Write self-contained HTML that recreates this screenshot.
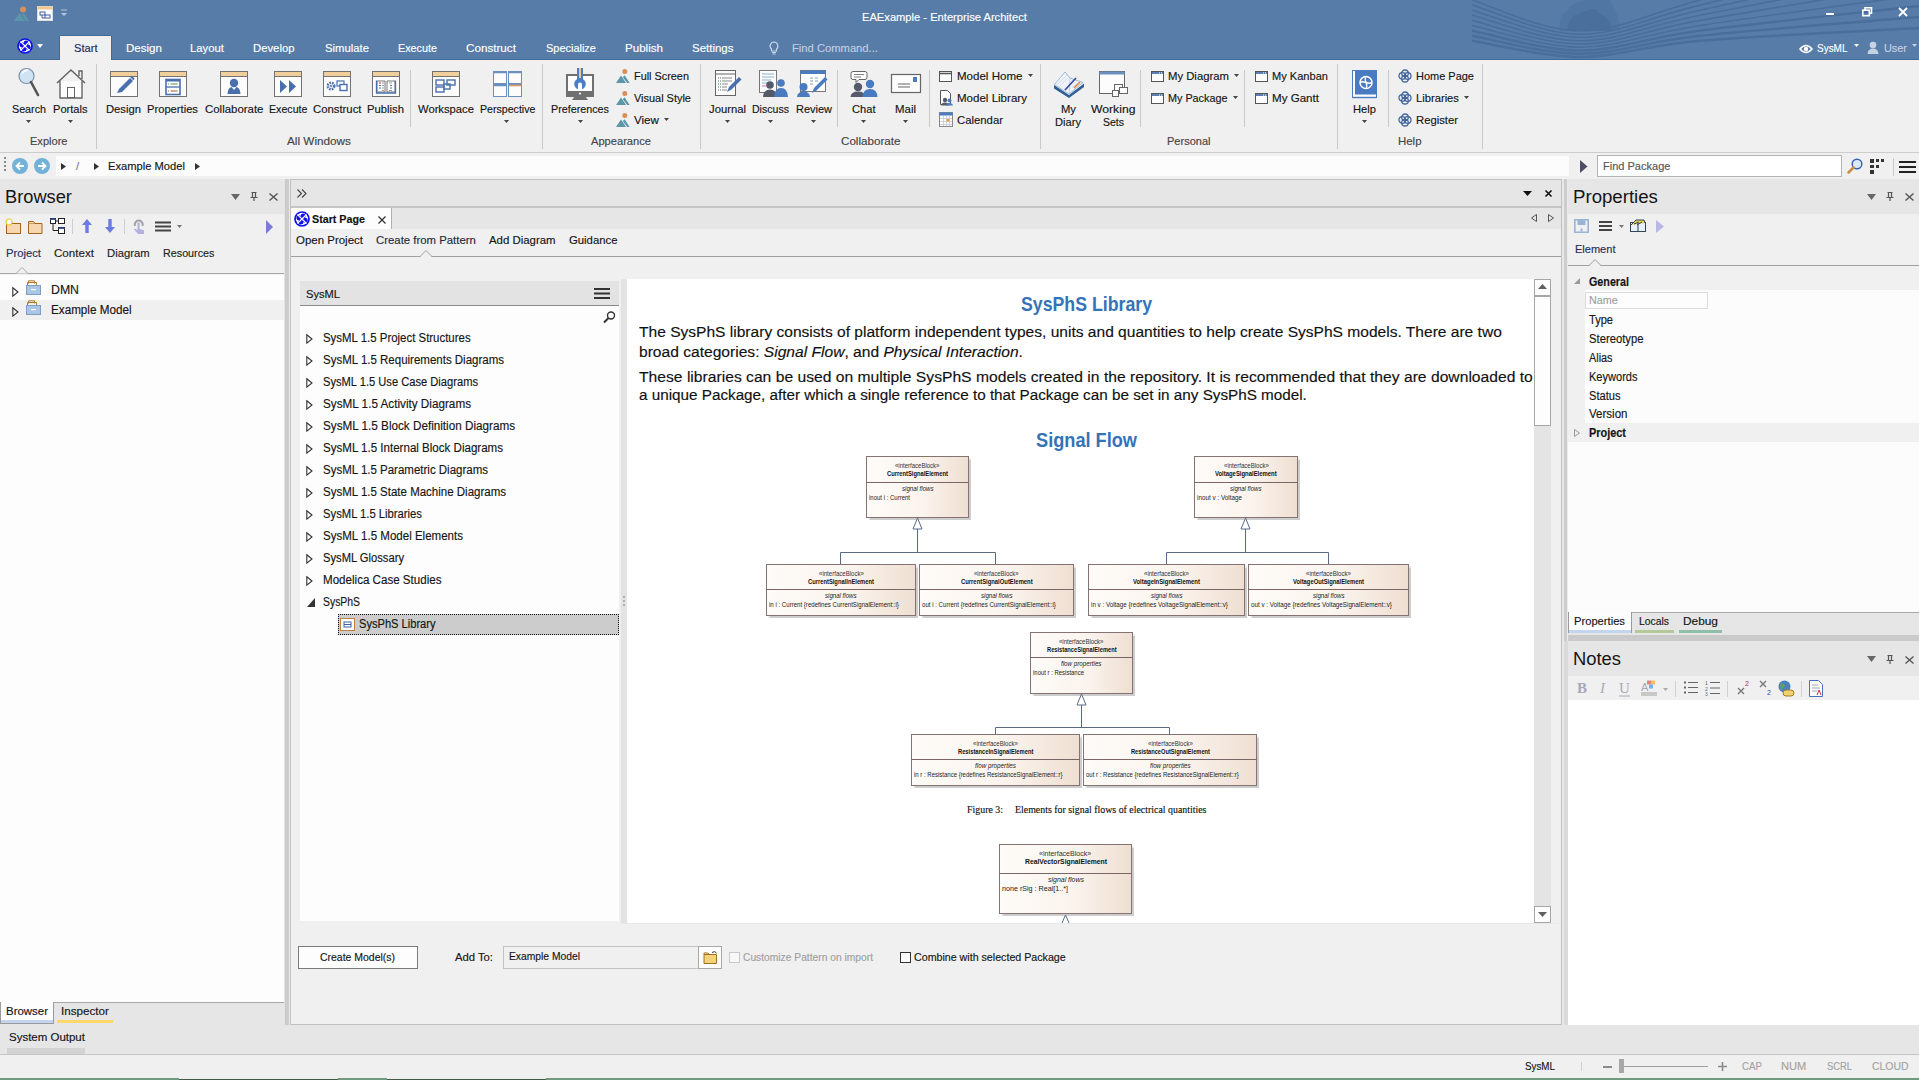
<!DOCTYPE html>
<html><head><meta charset="utf-8">
<style>
*{margin:0;padding:0;box-sizing:border-box}
html,body{width:1919px;height:1080px;overflow:hidden;background:#f0f0f0;font-family:"Liberation Sans",sans-serif;color:#151515}
.a{position:absolute}
.t{position:absolute;white-space:nowrap;-webkit-text-stroke:0.15px currentColor}
.n{-webkit-text-stroke:0}
svg{position:absolute;overflow:visible}
</style></head><body>

<div class="a" style="left:0px;top:0px;width:1919px;height:60px;background:#577ca8;"></div>
<svg style="left:0px;top:0px;overflow:hidden" width="1919" height="60" viewBox="0 0 1919 60"><g><path d="M1560 31 C1558 20, 1562 12, 1567 11 C1570 4, 1580 0, 1592 0 L1610 0 C1612 5, 1616 10, 1618 18 L1620 31 Z" fill="#5076a3"/><path d="M1568 31 C1566 20, 1575 14, 1583 12 C1590 8, 1602 12, 1610 22 L1612 31 Z" fill="#4b6f9c"/><circle cx="1593" cy="15" r="6" fill="#4b6f9c"/><path d="M1472 0.0 C1490.0 5.2 1542.0 31.0 1580 31.0 C1618.0 31.0 1643.5 15.2 1700 0.0 C1756.5 -15.2 1882.5 -50.0 1919 -60.0" stroke="#4a6e9b" stroke-width="1.6" fill="none"/><path d="M1472 5.1 C1490.0 10.0 1542.0 34.2 1580 34.2 C1618.0 34.2 1643.5 19.0 1700 5.1 C1756.5 -8.8 1882.5 -40.0 1919 -49.0" stroke="#4a6e9b" stroke-width="1.6" fill="none"/><path d="M1472 10.2 C1490.0 14.8 1542.0 37.5 1580 37.5 C1618.0 37.5 1643.5 22.8 1700 10.2 C1756.5 -2.4 1882.5 -30.0 1919 -38.0" stroke="#4a6e9b" stroke-width="1.6" fill="none"/><path d="M1472 15.3 C1490.0 19.5 1542.0 40.8 1580 40.8 C1618.0 40.8 1643.5 26.6 1700 15.3 C1756.5 4.0 1882.5 -19.9 1919 -27.0" stroke="#4a6e9b" stroke-width="1.6" fill="none"/><path d="M1472 20.4 C1490.0 24.3 1542.0 44.0 1580 44.0 C1618.0 44.0 1643.5 30.4 1700 20.4 C1756.5 10.4 1882.5 -9.9 1919 -16.0" stroke="#4a6e9b" stroke-width="1.6" fill="none"/><path d="M1472 25.5 C1490.0 29.1 1542.0 47.2 1580 47.2 C1618.0 47.2 1643.5 34.2 1700 25.5 C1756.5 16.8 1882.5 0.1 1919 -5.0" stroke="#4a6e9b" stroke-width="1.6" fill="none"/><path d="M1472 30.6 C1490.0 33.9 1542.0 50.5 1580 50.5 C1618.0 50.5 1643.5 38.0 1700 30.6 C1756.5 23.2 1882.5 10.1 1919 6.0" stroke="#4a6e9b" stroke-width="2.4" fill="none"/><path d="M1472 35.7 C1490.0 38.7 1542.0 53.8 1580 53.8 C1618.0 53.8 1643.5 41.8 1700 35.7 C1756.5 29.6 1882.5 20.1 1919 17.0" stroke="#4a6e9b" stroke-width="2.4" fill="none"/><path d="M1472 40.8 C1490.0 43.5 1542.0 57.0 1580 57.0 C1618.0 57.0 1643.5 45.6 1700 40.8 C1756.5 36.0 1882.5 30.1 1919 28.0" stroke="#4a6e9b" stroke-width="2.4" fill="none"/></g></svg>
<div class="t" style="left:862px;top:10px;font-size:11.2px;line-height:14px;color:#ffffff;transform:scaleX(0.9965);transform-origin:0 0;">EAExample - Enterprise Architect</div>
<svg style="left:13px;top:6px;" width="16" height="16" viewBox="0 0 16 16"><circle cx="10" cy="3.5" r="3" fill="#d8905a"/><path d="M1 15 L6.5 7 L12 15Z" fill="#5b96a9"/><path d="M9 9 L11 7 L16 15 L13 15Z" fill="#5b96a9"/></svg>
<svg style="left:37px;top:6px;" width="16" height="15" viewBox="0 0 16 15"><rect x="0.5" y="0.5" width="15" height="14" fill="#fff" stroke="#ddd"/><rect x="0.5" y="0.5" width="15" height="3" fill="#f0c890"/><rect x="3" y="6" width="5" height="3" fill="none" stroke="#3a5d9c"/><rect x="8" y="9" width="5" height="3" fill="none" stroke="#3a5d9c"/><path d="M5 9v3h3" stroke="#3a5d9c" fill="none"/></svg>
<svg style="left:61px;top:10px;" width="7" height="8" viewBox="0 0 7 8"><path d="M0 0h6" stroke="#b8c8dc"/><path d="M0 3h6l-3 3z" fill="#b8c8dc"/></svg>
<svg style="left:1826px;top:12px;" width="10" height="4" viewBox="0 0 10 4"><rect x="0" y="1" width="8" height="2" fill="#fff"/></svg>
<svg style="left:1862px;top:7px;" width="11" height="10" viewBox="0 0 11 10"><rect x="0.8" y="3.2" width="6.5" height="5.5" fill="none" stroke="#fff" stroke-width="1.6"/><path d="M3 3V0.8h6.5v5.5H7.5" fill="none" stroke="#fff" stroke-width="1.6"/></svg>
<svg style="left:1898px;top:7px;" width="10" height="10" viewBox="0 0 10 10"><path d="M1 1L9 9M9 1L1 9" stroke="#fff" stroke-width="1.8"/></svg>
<svg style="left:17px;top:38px;" width="16" height="16" viewBox="0 0 16 16"><g transform="scale(1.0)"><circle cx="8" cy="8" r="7" fill="#fff" stroke="#1010e8" stroke-width="1.7"/><circle cx="11.10" cy="9.13" r="2.5" fill="#1010e8"/><circle cx="6.87" cy="11.10" r="2.5" fill="#1010e8"/><circle cx="4.90" cy="6.87" r="2.5" fill="#1010e8"/><circle cx="9.13" cy="4.90" r="2.5" fill="#1010e8"/><path d="M3.5 3.5L12.5 12.5M12.5 3.5L3.5 12.5" stroke="#fff" stroke-width="1.1"/></g></svg>
<svg style="left:37px;top:44px;" width="6" height="4" viewBox="0 0 6 4"><path d="M0 0h6l-3 4z" fill="#fff"/></svg>
<div class="a" style="left:0px;top:59px;width:1919px;height:1px;background:#3f6998;"></div>
<div class="a" style="left:59px;top:36px;width:1px;height:24px;background:#3f6998;"></div>
<div class="a" style="left:111px;top:36px;width:1px;height:24px;background:#3f6998;"></div>
<div class="a" style="left:60px;top:35px;width:51px;height:1px;background:#3f6998;"></div>
<div class="a" style="left:60px;top:36px;width:51px;height:25px;background:#f0f0f0;border:1px solid #f6efe6;border-bottom:none"></div>
<div class="t" style="left:74px;top:41px;font-size:11.2px;line-height:14px;color:#1b2a5a;transform:scaleX(0.9935);transform-origin:0 0;">Start</div>
<div class="t" style="left:126px;top:41px;font-size:11.2px;line-height:14px;color:#fff;transform:scaleX(1.0326);transform-origin:0 0;">Design</div>
<div class="t" style="left:190px;top:41px;font-size:11.2px;line-height:14px;color:#fff;transform:scaleX(1.0111);transform-origin:0 0;">Layout</div>
<div class="t" style="left:253px;top:41px;font-size:11.2px;line-height:14px;color:#fff;transform:scaleX(1.0099);transform-origin:0 0;">Develop</div>
<div class="t" style="left:325px;top:41px;font-size:11.2px;line-height:14px;color:#fff;transform:scaleX(1.0097);transform-origin:0 0;">Simulate</div>
<div class="t" style="left:398px;top:41px;font-size:11.2px;line-height:14px;color:#fff;transform:scaleX(0.9637);transform-origin:0 0;">Execute</div>
<div class="t" style="left:466px;top:41px;font-size:11.2px;line-height:14px;color:#fff;transform:scaleX(1.0432);transform-origin:0 0;">Construct</div>
<div class="t" style="left:546px;top:41px;font-size:11.2px;line-height:14px;color:#fff;transform:scaleX(0.9794);transform-origin:0 0;">Specialize</div>
<div class="t" style="left:625px;top:41px;font-size:11.2px;line-height:14px;color:#fff;transform:scaleX(1.0344);transform-origin:0 0;">Publish</div>
<div class="t" style="left:692px;top:41px;font-size:11.2px;line-height:14px;color:#fff;transform:scaleX(1.0255);transform-origin:0 0;">Settings</div>
<svg style="left:769px;top:41px;" width="10" height="14" viewBox="0 0 10 14"><path d="M5 1a4 4 0 0 1 2.5 7v2h-5V8A4 4 0 0 1 5 1z" fill="none" stroke="#c9d6e6" stroke-width="1.2"/><path d="M3 11.5h4M3.5 13h3" stroke="#c9d6e6"/></svg>
<div class="t" style="left:792px;top:41px;font-size:11.2px;line-height:14px;color:#c0cfe0;transform:scaleX(1.0012);transform-origin:0 0;">Find Command...</div>
<svg style="left:1799px;top:44px;" width="14" height="10" viewBox="0 0 14 10"><path d="M1 5 Q7 -2 13 5 Q7 12 1 5z" fill="none" stroke="#fff" stroke-width="1.6"/><circle cx="7" cy="5" r="2.2" fill="#fff"/></svg>
<div class="t" style="left:1817px;top:41px;font-size:11.2px;line-height:14px;color:#fff;transform:scaleX(0.8910);transform-origin:0 0;">SysML</div>
<svg style="left:1854px;top:44px;" width="5" height="4" viewBox="0 0 5 4"><path d="M0 0h5l-2.5 3z" fill="#fff"/></svg>
<svg style="left:1867px;top:41px;" width="12" height="13" viewBox="0 0 12 13"><circle cx="6" cy="4" r="3.3" fill="#c5d2e3"/><path d="M0.5 13 Q1 7.5 6 7.5 Q11 7.5 11.5 13z" fill="#c5d2e3"/></svg>
<div class="t" style="left:1884px;top:41px;font-size:11.2px;line-height:14px;color:#c5d2e3;transform:scaleX(0.9726);transform-origin:0 0;">User</div>
<svg style="left:1912px;top:44px;" width="5" height="4" viewBox="0 0 5 4"><path d="M0 0h5l-2.5 3z" fill="#c5d2e3"/></svg>
<div class="a" style="left:0px;top:60px;width:1919px;height:92px;background:#f0f0f0;"></div>
<div class="a" style="left:0px;top:60px;width:59px;height:1px;background:#f4f1ec;"></div>
<div class="a" style="left:112px;top:60px;width:1807px;height:1px;background:#f4f1ec;"></div>
<div class="a" style="left:0px;top:152px;width:1919px;height:1px;background:#cdcdcd;"></div>
<div class="a" style="left:0px;top:153px;width:1919px;height:26px;background:#f0f0f0;"></div>
<div class="a" style="left:56px;top:156px;width:1513px;height:20px;background:#fcfcfc;"></div>
<svg style="left:18px;top:67px;" width="22" height="30" viewBox="0 0 22 30"><circle cx="8.5" cy="9" r="7.5" fill="#cfe3f5" stroke="#7a8ea8" stroke-width="1.2"/><path d="M4 7 Q6 3 10 3" stroke="#fff" stroke-width="1.5" fill="none"/><path d="M13 15 L20 28" stroke="#555" stroke-width="2.6" stroke-linecap="round"/></svg>
<div class="t" style="left:12px;top:102px;font-size:11.2px;line-height:14px;transform:scaleX(0.9581);transform-origin:0 0;">Search</div>
<svg style="left:26.0px;top:120px;" width="5" height="3" viewBox="0 0 5 3"><path d="M0 0h5l-2.5 3z" fill="#444"/></svg>
<svg style="left:55px;top:68px;" width="32" height="31" viewBox="0 0 32 31"><path d="M2 15 L16 2 L30 15" fill="none" stroke="#666" stroke-width="1.6"/><path d="M24 8V3h3v8" fill="none" stroke="#666" stroke-width="1.4"/><path d="M5 13V30H27V13" fill="#fdfdfd" stroke="#666" stroke-width="1.4"/><rect x="12.5" y="19.5" width="7" height="10" fill="#fdfdfd" stroke="#666"/></svg>
<div class="t" style="left:53px;top:102px;font-size:11.2px;line-height:14px;transform:scaleX(0.9897);transform-origin:0 0;">Portals</div>
<svg style="left:67.5px;top:120px;" width="5" height="3" viewBox="0 0 5 3"><path d="M0 0h5l-2.5 3z" fill="#444"/></svg>
<div class="a" style="left:96px;top:64px;width:1px;height:85px;background:#c8c8c8;"></div>
<div class="t" style="left:30.2px;top:134px;font-size:11.2px;line-height:14px;color:#444;transform:scaleX(0.9874);transform-origin:0 0;">Explore</div>
<svg style="left:110px;top:71px;" width="28" height="26" viewBox="0 0 28 26"><rect x="0.5" y="0.5" width="27" height="25" fill="#fcfcfc" stroke="#727272"/><rect x="1" y="1" width="26" height="4.5" fill="#f0cf9c"/><path d="M1 5.5H27" stroke="#727272"/><path d="M7 22 L9 18 L20 7 L23 10 L12 21 Z" fill="#4a6fae"/><path d="M21 5.5l3 3" stroke="#4a6fae" stroke-width="2"/></svg>
<div class="t" style="left:106px;top:102px;font-size:11.2px;line-height:14px;transform:scaleX(1.0039);transform-origin:0 0;">Design</div>
<svg style="left:159px;top:71px;" width="28" height="26" viewBox="0 0 28 26"><rect x="0.5" y="0.5" width="27" height="25" fill="#fcfcfc" stroke="#727272"/><rect x="1" y="1" width="26" height="4.5" fill="#f0cf9c"/><path d="M1 5.5H27" stroke="#727272"/><rect x="7" y="8.5" width="14" height="15" fill="#fff" stroke="#4a6fae" stroke-width="1.6"/><rect x="7" y="8" width="14" height="2.5" fill="#4a6fae"/><path d="M7 16h14" stroke="#4a6fae" stroke-width="1.3"/><path d="M9 13h1M11.5 13h7" stroke="#5a8a5a"/><path d="M9 20h1M11.5 20h7" stroke="#a05a3a"/></svg>
<div class="t" style="left:147px;top:102px;font-size:11.2px;line-height:14px;transform:scaleX(0.9991);transform-origin:0 0;">Properties</div>
<svg style="left:220px;top:71px;" width="28" height="26" viewBox="0 0 28 26"><rect x="0.5" y="0.5" width="27" height="25" fill="#fcfcfc" stroke="#727272"/><rect x="1" y="1" width="26" height="4.5" fill="#f0cf9c"/><path d="M1 5.5H27" stroke="#727272"/><circle cx="14" cy="12" r="4.2" fill="#4a6fae"/><path d="M7.5 23 Q8 16.5 11.5 16 L14 19 L16.5 16 Q20 16.5 20.5 23 Z" fill="#4a6fae"/></svg>
<div class="t" style="left:204.5px;top:102px;font-size:11.2px;line-height:14px;transform:scaleX(1.0213);transform-origin:0 0;">Collaborate</div>
<svg style="left:274px;top:71px;" width="28" height="26" viewBox="0 0 28 26"><rect x="0.5" y="0.5" width="27" height="25" fill="#fcfcfc" stroke="#727272"/><rect x="1" y="1" width="26" height="4.5" fill="#f0cf9c"/><path d="M1 5.5H27" stroke="#727272"/><path d="M6 9 L13 15.5 L6 22 Z M15 9 L22 15.5 L15 22 Z" fill="#4a6fae"/></svg>
<div class="t" style="left:269px;top:102px;font-size:11.2px;line-height:14px;transform:scaleX(0.9513);transform-origin:0 0;">Execute</div>
<svg style="left:323px;top:71px;" width="28" height="26" viewBox="0 0 28 26"><rect x="0.5" y="0.5" width="27" height="25" fill="#fcfcfc" stroke="#727272"/><rect x="1" y="1" width="26" height="4.5" fill="#f0cf9c"/><path d="M1 5.5H27" stroke="#727272"/><circle cx="8" cy="15" r="3.2" fill="none" stroke="#4a6fae" stroke-width="2.6" stroke-dasharray="1.6 1"/><circle cx="8" cy="15" r="1" fill="#4a6fae"/><rect x="14" y="10" width="7" height="5" fill="none" stroke="#4a6fae" stroke-width="1.2"/><rect x="17" y="13.5" width="7" height="6" fill="#fff" stroke="#4a6fae" stroke-width="1.4"/></svg>
<div class="t" style="left:312.5px;top:102px;font-size:11.2px;line-height:14px;transform:scaleX(1.0119);transform-origin:0 0;">Construct</div>
<svg style="left:372px;top:71px;" width="28" height="26" viewBox="0 0 28 26"><rect x="0.5" y="0.5" width="27" height="25" fill="#fcfcfc" stroke="#727272"/><rect x="1" y="1" width="26" height="4.5" fill="#f0cf9c"/><path d="M1 5.5H27" stroke="#727272"/><path d="M5 10 H13 V21 H5 Z M15 10 H23 V21 H15 Z" fill="#fff" stroke="#555" stroke-width="0.8"/><path d="M4.5 9.5V22H23.5V9.5" fill="none" stroke="#4a6fae" stroke-width="1.3"/><path d="M7 12h2" stroke="#d02020"/><path d="M7 14.5h2M7 17h2M18 14.5h2M18 17h2" stroke="#4a6fae"/><path d="M10 12h2M10 14.5h2M10 17h2M10 19.5h2M17 12h3M17 19.5h3" stroke="#999"/></svg>
<div class="t" style="left:367px;top:102px;font-size:11.2px;line-height:14px;transform:scaleX(1.0072);transform-origin:0 0;">Publish</div>
<div class="a" style="left:410px;top:70px;width:1px;height:57px;background:#c8c8c8;"></div>
<svg style="left:432px;top:71px;" width="28" height="26" viewBox="0 0 28 26"><rect x="0.5" y="0.5" width="27" height="25" fill="#fcfcfc" stroke="#727272"/><rect x="1" y="1" width="26" height="4.5" fill="#f0cf9c"/><path d="M1 5.5H27" stroke="#727272"/><rect x="4" y="9" width="8" height="5" fill="none" stroke="#4a6fae" stroke-width="1.4"/><rect x="15" y="9" width="8" height="5" fill="none" stroke="#4a6fae" stroke-width="1.4"/><rect x="4" y="16" width="8" height="5" fill="none" stroke="#4a6fae" stroke-width="1.4"/><rect x="12" y="13" width="6" height="5" fill="none" stroke="#4a6fae" stroke-width="1.4"/></svg>
<div class="t" style="left:418px;top:102px;font-size:11.2px;line-height:14px;transform:scaleX(1.0033);transform-origin:0 0;">Workspace</div>
<svg style="left:493px;top:71px;" width="29" height="26" viewBox="0 0 29 26"><rect x="0.5" y="0.5" width="13" height="12" fill="#fcfcfc" stroke="#6b8fbf"/><rect x="15.5" y="0.5" width="13" height="12" fill="#fcfcfc" stroke="#6b8fbf"/><rect x="0.5" y="13.5" width="13" height="12" fill="#fcfcfc" stroke="#6b8fbf"/><rect x="15.5" y="13.5" width="13" height="12" fill="#fcfcfc" stroke="#6b8fbf"/><path d="M1 1.5h12M16 1.5h12M1 14.5h12" stroke="#6b8fbf" stroke-width="1.6"/><path d="M16 14.5h12" stroke="#e09a5a" stroke-width="1.6"/></svg>
<div class="t" style="left:480px;top:102px;font-size:11.2px;line-height:14px;transform:scaleX(0.9484);transform-origin:0 0;">Perspective</div>
<svg style="left:504.0px;top:120px;" width="5" height="3" viewBox="0 0 5 3"><path d="M0 0h5l-2.5 3z" fill="#444"/></svg>
<div class="a" style="left:542px;top:64px;width:1px;height:85px;background:#c8c8c8;"></div>
<div class="t" style="left:287.0px;top:134px;font-size:11.2px;line-height:14px;color:#444;transform:scaleX(1.0493);transform-origin:0 0;">All Windows</div>
<svg style="left:566px;top:67px;" width="29" height="33" viewBox="0 0 29 33"><rect x="1" y="8" width="26" height="21" fill="#fdfdfd" stroke="#707070" stroke-width="2"/><rect x="0" y="24" width="28" height="5" fill="#707070"/><circle cx="14" cy="26.5" r="1.1" fill="#fff"/><path d="M9 29H19L22 33H6Z" fill="#707070"/><rect x="11" y="1" width="6" height="12" fill="#4a7fc6"/><rect x="13" y="1" width="2" height="10" fill="#f2c98a"/><circle cx="14" cy="17" r="5.8" fill="#4a7fc6"/><rect x="12" y="18" width="4" height="6" fill="#fdfdfd"/><circle cx="14" cy="17.5" r="2" fill="#fdfdfd"/></svg>
<div class="t" style="left:551px;top:102px;font-size:11.2px;line-height:14px;transform:scaleX(0.9605);transform-origin:0 0;">Preferences</div>
<svg style="left:577.5px;top:120px;" width="5" height="3" viewBox="0 0 5 3"><path d="M0 0h5l-2.5 3z" fill="#444"/></svg>
<svg style="left:616px;top:69px;" width="14" height="15" viewBox="0 0 14 15"><circle cx="8.8" cy="2.6" r="2.5" fill="#d8905a"/><path d="M0 14 L5 6.5 L10 14Z" fill="#5b96a9"/><path d="M6.8 8.2 L8.6 6.3 L13.6 14 L11.2 14Z" fill="#5b96a9"/></svg>
<div class="t" style="left:634px;top:69px;font-size:11.2px;line-height:14px;transform:scaleX(0.9709);transform-origin:0 0;">Full Screen</div>
<svg style="left:616px;top:91px;" width="14" height="15" viewBox="0 0 14 15"><circle cx="8.8" cy="2.6" r="2.5" fill="#d8905a"/><path d="M0 14 L5 6.5 L10 14Z" fill="#5b96a9"/><path d="M6.8 8.2 L8.6 6.3 L13.6 14 L11.2 14Z" fill="#5b96a9"/></svg>
<div class="t" style="left:634px;top:91px;font-size:11.2px;line-height:14px;transform:scaleX(0.9774);transform-origin:0 0;">Visual Style</div>
<svg style="left:616px;top:113px;" width="14" height="15" viewBox="0 0 14 15"><circle cx="8.8" cy="2.6" r="2.5" fill="#d8905a"/><path d="M0 14 L5 6.5 L10 14Z" fill="#5b96a9"/><path d="M6.8 8.2 L8.6 6.3 L13.6 14 L11.2 14Z" fill="#5b96a9"/></svg>
<div class="t" style="left:634px;top:113px;font-size:11.2px;line-height:14px;transform:scaleX(1.0384);transform-origin:0 0;">View</div>
<svg style="left:664.0px;top:117.5px;" width="5" height="3" viewBox="0 0 5 3"><path d="M0 0h5l-2.5 3z" fill="#444"/></svg>
<div class="a" style="left:700px;top:64px;width:1px;height:85px;background:#c8c8c8;"></div>
<div class="t" style="left:591.0px;top:134px;font-size:11.2px;line-height:14px;color:#444;transform:scaleX(0.9933);transform-origin:0 0;">Appearance</div>
<svg style="left:715px;top:70px;" width="27" height="27" viewBox="0 0 27 27"><rect x="0.5" y="0.5" width="20" height="25" fill="#fcfcfc" stroke="#666"/><path d="M1 4h19" stroke="#666"/><path d="M3 8h3M3 11h3M3 14h3M3 17h3M3 20h3" stroke="#3a8a5a" stroke-dasharray="1 1"/><path d="M7 8h10M7 11h10M7 14h6M7 17h5M7 20h5" stroke="#8a8a8a"/><path d="M12 22 L14 17 L24 7 L26.5 9.5 L16.5 19.5 Z" fill="#4a6fae"/></svg>
<div class="t" style="left:709px;top:102px;font-size:11.2px;line-height:14px;transform:scaleX(1.0072);transform-origin:0 0;">Journal</div>
<svg style="left:725.0px;top:120px;" width="5" height="3" viewBox="0 0 5 3"><path d="M0 0h5l-2.5 3z" fill="#444"/></svg>
<svg style="left:759px;top:70px;" width="29" height="27" viewBox="0 0 29 27"><rect x="0.5" y="0.5" width="17" height="22" fill="#fcfcfc" stroke="#777"/><path d="M3 4h12M3 7h12M3 10h9M3 13h9" stroke="#8ab4c8"/><path d="M3 16h4" stroke="#e070a0"/><circle cx="11" cy="15" r="3.8" fill="#555a6a"/><path d="M4 27 Q4.5 19.5 11 19.5 Q17.5 19.5 18 27Z" fill="#555a6a"/><circle cx="22" cy="13" r="3.8" fill="#4a7bc0"/><path d="M15 27 Q15.5 18 22 18 Q28.5 18 29 27Z" fill="#4a7bc0"/></svg>
<div class="t" style="left:752px;top:102px;font-size:11.2px;line-height:14px;transform:scaleX(0.9437);transform-origin:0 0;">Discuss</div>
<svg style="left:768.0px;top:120px;" width="5" height="3" viewBox="0 0 5 3"><path d="M0 0h5l-2.5 3z" fill="#444"/></svg>
<svg style="left:797px;top:70px;" width="33" height="27" viewBox="0 0 33 27"><rect x="3.5" y="0.5" width="25" height="21" fill="#fcfcfc" stroke="#777"/><rect x="3.5" y="0.5" width="25" height="3.5" fill="#4a7bc0"/><path d="M13 8h3M18 8h3M13 11h3M18 11h3M13 14h3" stroke="#8aa"/><circle cx="6.5" cy="17" r="4" fill="#4a7bc0"/><path d="M0 27 Q0.5 21.5 6.5 21.5 Q12.5 21.5 13 27Z" fill="#4a7bc0"/><path d="M15 23 L17 18 L28 7 L30.5 9.5 L19.5 20.5 Z" fill="#4a7bc0"/></svg>
<div class="t" style="left:796px;top:102px;font-size:11.2px;line-height:14px;transform:scaleX(0.9803);transform-origin:0 0;">Review</div>
<svg style="left:811.0px;top:120px;" width="5" height="3" viewBox="0 0 5 3"><path d="M0 0h5l-2.5 3z" fill="#444"/></svg>
<div class="a" style="left:837px;top:70px;width:1px;height:57px;background:#c8c8c8;"></div>
<svg style="left:850px;top:70px;" width="28" height="27" viewBox="0 0 28 27"><path d="M3 1.5h12a2 2 0 0 1 2 2v4a2 2 0 0 1-2 2H9l-3 3v-3H3a2 2 0 0 1-2-2v-4a2 2 0 0 1 2-2z" fill="#fdfdfd" stroke="#666"/><path d="M4 4.5h10M4 7h7" stroke="#666" stroke-width="0.8"/><circle cx="8" cy="17" r="4.2" fill="#555a6a"/><path d="M0.5 27 Q1 21.5 8 21.5 Q15 21.5 15.5 27Z" fill="#555a6a"/><circle cx="20" cy="14" r="4.2" fill="#4a7bc0"/><path d="M12.5 27 Q13 19 20 19 Q27 19 27.5 27Z" fill="#4a7bc0"/></svg>
<div class="t" style="left:852px;top:102px;font-size:11.2px;line-height:14px;transform:scaleX(0.9933);transform-origin:0 0;">Chat</div>
<svg style="left:861.0px;top:120px;" width="5" height="3" viewBox="0 0 5 3"><path d="M0 0h5l-2.5 3z" fill="#444"/></svg>
<svg style="left:891px;top:74px;" width="30" height="19" viewBox="0 0 30 19"><rect x="0.5" y="0.5" width="29" height="18" fill="#fcfcfc" stroke="#666" stroke-width="1.2"/><path d="M7 10h12M7 13h12" stroke="#666" stroke-width="1"/><rect x="22" y="3" width="4" height="5" fill="#4a7bc0"/></svg>
<div class="t" style="left:895px;top:102px;font-size:11.2px;line-height:14px;transform:scaleX(1.0226);transform-origin:0 0;">Mail</div>
<svg style="left:903.0px;top:120px;" width="5" height="3" viewBox="0 0 5 3"><path d="M0 0h5l-2.5 3z" fill="#444"/></svg>
<div class="a" style="left:929px;top:70px;width:1px;height:57px;background:#c8c8c8;"></div>
<svg style="left:939px;top:71px;" width="13" height="11" viewBox="0 0 13 11"><rect x="0.5" y="0.5" width="12" height="10" fill="#fdfdfd" stroke="#555"/><path d="M1 2.5h11" stroke="#555" stroke-width="1.5"/></svg>
<div class="t" style="left:957px;top:69px;font-size:11.2px;line-height:14px;transform:scaleX(1.0316);transform-origin:0 0;">Model Home</div>
<svg style="left:1028.0px;top:73.5px;" width="5" height="3" viewBox="0 0 5 3"><path d="M0 0h5l-2.5 3z" fill="#444"/></svg>
<svg style="left:939px;top:90px;" width="14" height="16" viewBox="0 0 14 16"><path d="M1.5 0.5h7l3 3v11h-10z" fill="#fdfdfd" stroke="#555"/><circle cx="6" cy="10" r="2.2" fill="#555a6a"/><path d="M2 15.5 Q2.5 12.5 6 12.5 Q9.5 12.5 10 15.5Z" fill="#555a6a"/><circle cx="10.5" cy="10.5" r="2" fill="#4a7bc0"/><path d="M7 15.5 Q7.5 13 10.5 13 Q13.5 13 14 15.5Z" fill="#4a7bc0"/></svg>
<div class="t" style="left:957px;top:91px;font-size:11.2px;line-height:14px;transform:scaleX(1.0316);transform-origin:0 0;">Model Library</div>
<svg style="left:939px;top:112px;" width="14" height="15" viewBox="0 0 14 15"><rect x="0.5" y="0.5" width="13" height="14" fill="#fdfdfd" stroke="#888"/><rect x="0.5" y="0.5" width="13" height="3" fill="#4a7bc0"/><path d="M1 6.5h12M1 9.5h12M1 12.5h12M4.5 4v10M7.5 4v10M10.5 4v10" stroke="#c0c8d8" stroke-width="0.8"/><rect x="7.5" y="7" width="3" height="2.5" fill="#f0a040"/></svg>
<div class="t" style="left:957px;top:113px;font-size:11.2px;line-height:14px;transform:scaleX(1.0120);transform-origin:0 0;">Calendar</div>
<div class="a" style="left:1040px;top:64px;width:1px;height:85px;background:#c8c8c8;"></div>
<div class="t" style="left:840.8px;top:134px;font-size:11.2px;line-height:14px;color:#444;transform:scaleX(1.0387);transform-origin:0 0;">Collaborate</div>
<svg style="left:1054px;top:71px;" width="30" height="26" viewBox="0 0 30 26"><path d="M0 14 L15 24 L30 12.5 L30 16 L15 27 L0 17.5Z" fill="#2f5f94"/><path d="M0.5 13.5 L11 1 L16 7 L29 11.5 L15 23 Z" fill="#eef3fa" stroke="#8fa8cc" stroke-width="0.8"/><path d="M16 7 L15 23" stroke="#b8c8e0" stroke-width="0.8"/><path d="M3 14 L13 4 M5 16 L14 7 M18 16 L26 11 M20 18 L27 13" stroke="#c8d4e8" stroke-width="0.7"/><path d="M11 19 L22 7" stroke="#3a4f9c" stroke-width="1.8"/><path d="M22 7 L23.5 5.5" stroke="#e8e0c0" stroke-width="1.8"/><path d="M20 17 L26 11" stroke="#e58a3a" stroke-width="1.6"/></svg>
<div class="t" style="left:1060.5px;top:102px;font-size:11.2px;line-height:14px;transform:scaleX(1.0047);transform-origin:0 0;">My</div>
<div class="t" style="left:1055.0px;top:115px;font-size:11.2px;line-height:14px;transform:scaleX(0.9948);transform-origin:0 0;">Diary</div>
<svg style="left:1099px;top:71px;" width="30" height="27" viewBox="0 0 30 27"><rect x="0.5" y="0.5" width="25" height="22" fill="#fcfcfc" stroke="#666"/><rect x="0.5" y="0.5" width="25" height="3" fill="#6b8fbf"/><rect x="15.5" y="13.5" width="8" height="6" fill="#fcfcfc" stroke="#666"/><rect x="20.5" y="16.5" width="8" height="6" fill="#fcfcfc" stroke="#666"/><rect x="13.5" y="19.5" width="6" height="6" fill="#fcfcfc" stroke="#666"/></svg>
<div class="t" style="left:1090.8px;top:102px;font-size:11.2px;line-height:14px;transform:scaleX(1.0887);transform-origin:0 0;">Working</div>
<div class="t" style="left:1103.0px;top:115px;font-size:11.2px;line-height:14px;transform:scaleX(0.9370);transform-origin:0 0;">Sets</div>
<div class="a" style="left:1140px;top:70px;width:1px;height:57px;background:#c8c8c8;"></div>
<svg style="left:1150.5px;top:71px;" width="13" height="11" viewBox="0 0 13 11"><rect x="0.5" y="0.5" width="12" height="10" fill="#fdfdfd" stroke="#555"/><rect x="1" y="1" width="11" height="2" fill="#5a7fb0"/><rect x="8" y="1.5" width="1" height="1" fill="#fff"/><rect x="10" y="1.5" width="1" height="1" fill="#fff"/></svg>
<div class="t" style="left:1168px;top:69px;font-size:11.2px;line-height:14px;transform:scaleX(1.0105);transform-origin:0 0;">My Diagram</div>
<svg style="left:1234.0px;top:73.5px;" width="5" height="3" viewBox="0 0 5 3"><path d="M0 0h5l-2.5 3z" fill="#444"/></svg>
<svg style="left:1150.5px;top:93px;" width="13" height="11" viewBox="0 0 13 11"><rect x="0.5" y="0.5" width="12" height="10" fill="#fdfdfd" stroke="#555"/><rect x="1" y="1" width="11" height="2" fill="#5a7fb0"/><rect x="8" y="1.5" width="1" height="1" fill="#fff"/><rect x="10" y="1.5" width="1" height="1" fill="#fff"/></svg>
<div class="t" style="left:1168px;top:91px;font-size:11.2px;line-height:14px;transform:scaleX(0.9655);transform-origin:0 0;">My Package</div>
<svg style="left:1233.0px;top:95.5px;" width="5" height="3" viewBox="0 0 5 3"><path d="M0 0h5l-2.5 3z" fill="#444"/></svg>
<div class="a" style="left:1244px;top:70px;width:1px;height:57px;background:#c8c8c8;"></div>
<svg style="left:1254.5px;top:71px;" width="13" height="11" viewBox="0 0 13 11"><rect x="0.5" y="0.5" width="12" height="10" fill="#fdfdfd" stroke="#555"/><rect x="1" y="1" width="11" height="2" fill="#5a7fb0"/><rect x="8" y="1.5" width="1" height="1" fill="#fff"/><rect x="10" y="1.5" width="1" height="1" fill="#fff"/></svg>
<div class="t" style="left:1272px;top:69px;font-size:11.2px;line-height:14px;transform:scaleX(0.9884);transform-origin:0 0;">My Kanban</div>
<svg style="left:1254.5px;top:93px;" width="13" height="11" viewBox="0 0 13 11"><rect x="0.5" y="0.5" width="12" height="10" fill="#fdfdfd" stroke="#555"/><rect x="1" y="1" width="11" height="2" fill="#5a7fb0"/><rect x="8" y="1.5" width="1" height="1" fill="#fff"/><rect x="10" y="1.5" width="1" height="1" fill="#fff"/></svg>
<div class="t" style="left:1272px;top:91px;font-size:11.2px;line-height:14px;transform:scaleX(1.0345);transform-origin:0 0;">My Gantt</div>
<div class="a" style="left:1337px;top:64px;width:1px;height:85px;background:#c8c8c8;"></div>
<div class="t" style="left:1167.2px;top:134px;font-size:11.2px;line-height:14px;color:#444;transform:scaleX(0.9840);transform-origin:0 0;">Personal</div>
<svg style="left:1352px;top:70px;" width="25" height="28" viewBox="0 0 25 28"><rect x="0.5" y="0.5" width="24" height="27" fill="#fdfdfd" stroke="#4a7bc0" stroke-width="1"/><rect x="3" y="0.5" width="21.5" height="24" fill="#4a7bc0"/><path d="M0.5 27.5h24" stroke="#4a7bc0" stroke-width="1.4"/><circle cx="14" cy="12.5" r="6" fill="none" stroke="#fff" stroke-width="1.5"/><path d="M14 7 C11 9 17 16 14 18 M8.5 12.5 C10.5 9.5 17.5 15.5 19.5 12.5" stroke="#fff" stroke-width="1.4" fill="none"/></svg>
<div class="t" style="left:1353px;top:102px;font-size:11.2px;line-height:14px;transform:scaleX(0.9985);transform-origin:0 0;">Help</div>
<svg style="left:1361.5px;top:120px;" width="5" height="3" viewBox="0 0 5 3"><path d="M0 0h5l-2.5 3z" fill="#444"/></svg>
<div class="a" style="left:1388px;top:70px;width:1px;height:57px;background:#c8c8c8;"></div>
<svg style="left:1397.5px;top:69px;" width="14" height="14" viewBox="0 0 14 14"><circle cx="7" cy="4.3" r="3.3" fill="none" stroke="#44689e" stroke-width="1.3"/><circle cx="9.7" cy="7" r="3.3" fill="none" stroke="#44689e" stroke-width="1.3"/><circle cx="7" cy="9.7" r="3.3" fill="none" stroke="#44689e" stroke-width="1.3"/><circle cx="4.3" cy="7" r="3.3" fill="none" stroke="#44689e" stroke-width="1.3"/></svg>
<div class="t" style="left:1416px;top:69px;font-size:11.2px;line-height:14px;transform:scaleX(0.9806);transform-origin:0 0;">Home Page</div>
<svg style="left:1397.5px;top:91px;" width="14" height="14" viewBox="0 0 14 14"><circle cx="7" cy="4.3" r="3.3" fill="none" stroke="#44689e" stroke-width="1.3"/><circle cx="9.7" cy="7" r="3.3" fill="none" stroke="#44689e" stroke-width="1.3"/><circle cx="7" cy="9.7" r="3.3" fill="none" stroke="#44689e" stroke-width="1.3"/><circle cx="4.3" cy="7" r="3.3" fill="none" stroke="#44689e" stroke-width="1.3"/></svg>
<div class="t" style="left:1416px;top:91px;font-size:11.2px;line-height:14px;transform:scaleX(1.0011);transform-origin:0 0;">Libraries</div>
<svg style="left:1464.0px;top:95.5px;" width="5" height="3" viewBox="0 0 5 3"><path d="M0 0h5l-2.5 3z" fill="#444"/></svg>
<svg style="left:1397.5px;top:113px;" width="14" height="14" viewBox="0 0 14 14"><circle cx="7" cy="4.3" r="3.3" fill="none" stroke="#44689e" stroke-width="1.3"/><circle cx="9.7" cy="7" r="3.3" fill="none" stroke="#44689e" stroke-width="1.3"/><circle cx="7" cy="9.7" r="3.3" fill="none" stroke="#44689e" stroke-width="1.3"/><circle cx="4.3" cy="7" r="3.3" fill="none" stroke="#44689e" stroke-width="1.3"/></svg>
<div class="t" style="left:1416px;top:113px;font-size:11.2px;line-height:14px;transform:scaleX(1.0070);transform-origin:0 0;">Register</div>
<div class="a" style="left:1482px;top:64px;width:1px;height:85px;background:#c8c8c8;"></div>
<div class="t" style="left:1397.8px;top:134px;font-size:11.2px;line-height:14px;color:#444;transform:scaleX(1.0202);transform-origin:0 0;">Help</div>
<div class="a" style="left:4px;top:157px;width:2px;height:2px;background:#8a8a8a;"></div>
<div class="a" style="left:4px;top:161px;width:2px;height:2px;background:#8a8a8a;"></div>
<div class="a" style="left:4px;top:165px;width:2px;height:2px;background:#8a8a8a;"></div>
<div class="a" style="left:4px;top:169px;width:2px;height:2px;background:#8a8a8a;"></div>
<svg style="left:12px;top:158px;" width="16" height="16" viewBox="0 0 16 16"><circle cx="8" cy="8" r="8" fill="#72b2d8"/><path d="M12 8H4.5M8 4.5L4.5 8L8 11.5" stroke="#fff" stroke-width="1.8" fill="none"/></svg>
<svg style="left:34px;top:158px;" width="16" height="16" viewBox="0 0 16 16"><circle cx="8" cy="8" r="8" fill="#72b2d8"/><path d="M4 8H11.5M8 4.5L11.5 8L8 11.5" stroke="#fff" stroke-width="1.8" fill="none"/></svg>
<svg style="left:61px;top:163px;" width="5.04" height="7" viewBox="0 0 5.04 7"><path d="M0 0L5.04 3.5L0 7z" fill="#333"/></svg>
<div class="t" style="left:76px;top:159px;font-size:11.2px;line-height:14px;color:#7a7a7a;">/</div>
<svg style="left:94px;top:163px;" width="5.04" height="7" viewBox="0 0 5.04 7"><path d="M0 0L5.04 3.5L0 7z" fill="#333"/></svg>
<div class="t" style="left:107.5px;top:159px;font-size:11.2px;line-height:14px;transform:scaleX(0.9975);transform-origin:0 0;">Example Model</div>
<svg style="left:195px;top:163px;" width="5.04" height="7" viewBox="0 0 5.04 7"><path d="M0 0L5.04 3.5L0 7z" fill="#333"/></svg>
<svg style="left:1580px;top:160px;" width="8" height="13" viewBox="0 0 8 13"><path d="M0 0L7.5 6.5L0 13z" fill="#4d4d66"/></svg>
<div class="a" style="left:1597px;top:155px;width:245px;height:22px;background:#ffffff;border:1px solid #b4b4b4"></div>
<div class="t" style="left:1602.5px;top:159px;font-size:11.2px;line-height:14px;color:#555;transform:scaleX(0.9856);transform-origin:0 0;">Find Package</div>
<svg style="left:1847px;top:158px;" width="16" height="16" viewBox="0 0 16 16"><circle cx="10" cy="6" r="4.8" fill="#dceaf8" stroke="#3a62a8" stroke-width="1.4"/><path d="M6.5 9.5L1.5 14.5" stroke="#c89048" stroke-width="2.6" stroke-linecap="round"/></svg>
<svg style="left:1870px;top:159px;" width="16" height="15" viewBox="0 0 16 15"><rect x="0" y="0" width="4" height="4" fill="#333"/><rect x="6" y="0" width="3" height="3" fill="#333"/><rect x="11" y="0" width="3" height="3" fill="#333"/><rect x="0" y="6" width="4" height="3" fill="#333"/><rect x="6" y="6" width="3" height="3" fill="#333"/><rect x="0" y="11" width="4" height="4" fill="#333"/></svg>
<div class="a" style="left:1893px;top:158px;width:1px;height:18px;background:#c8c8c8;"></div>
<svg style="left:1899px;top:161px;" width="17" height="12" viewBox="0 0 17 12"><path d="M0 1h17M0 6h17M0 11h17" stroke="#222" stroke-width="2"/></svg>
<div class="a" style="left:0px;top:179px;width:284px;height:35px;background:#e6e6e6;"></div>
<div class="t n" style="left:5px;top:185px;font-size:18.3px;line-height:23px;transform:scaleX(0.9982);transform-origin:0 0;">Browser</div>
<svg style="left:231px;top:194px;" width="9" height="6" viewBox="0 0 9 6"><path d="M0 0h9l-4.5 6z" fill="#666"/></svg>
<svg style="left:250px;top:192px;" width="8" height="9" viewBox="0 0 8 9"><path d="M1.5 0.5h5M2.5 0.5v5M5.5 0.5v5M0.5 5.5h7M4 5.5V9" stroke="#555" stroke-width="1.2" fill="none"/></svg>
<svg style="left:269px;top:193px;" width="9" height="8" viewBox="0 0 9 8"><path d="M0.5 0.5L8.5 7.5M8.5 0.5L0.5 7.5" stroke="#555" stroke-width="1.4"/></svg>
<div class="a" style="left:0px;top:214px;width:284px;height:59px;background:#f0f0f0;"></div>
<svg style="left:5px;top:218px;" width="16" height="16" viewBox="0 0 16 16"><rect x="1.5" y="5.5" width="14" height="10" fill="#f6d7b0" stroke="#a8651a"/><path d="M1.5 5.5V4h5l1 1.5" fill="none" stroke="#a8651a"/><circle cx="4" cy="4" r="3" fill="#fff" stroke="#e8d020" stroke-width="1.2"/></svg>
<svg style="left:27px;top:218px;" width="16" height="16" viewBox="0 0 16 16"><path d="M1.5 5.5h13.5v10H1.5z" fill="#f6d7b0" stroke="#a8651a"/><path d="M1.5 5.5V3.5h5l1.5 2" fill="#f6d7b0" stroke="#a8651a"/></svg>
<svg style="left:50px;top:218px;" width="16" height="16" viewBox="0 0 16 16"><rect x="0.5" y="0.5" width="5" height="5" fill="#fff" stroke="#222"/><rect x="0.5" y="0.5" width="5" height="1.5" fill="#3a5ab0"/><rect x="8.5" y="0.5" width="6" height="5" fill="#fff" stroke="#222"/><rect x="8.5" y="9.5" width="6" height="6" fill="#fff" stroke="#222"/><rect x="8.5" y="9.5" width="6" height="1.5" fill="#3a5ab0"/><path d="M3 6v6.5h5.5M5.5 3h3" stroke="#222" fill="none"/></svg>
<div class="a" style="left:72px;top:219px;width:1px;height:15px;background:#cfcfcf;"></div>
<svg style="left:81.5px;top:219px;" width="10" height="14" viewBox="0 0 10 14"><path d="M5 0L10 6H6.7V14H3.3V6H0z" fill="#6c7be0"/></svg>
<svg style="left:105px;top:219px;" width="10" height="14" viewBox="0 0 10 14"><path d="M5 14L10 8H6.7V0H3.3V8H0z" fill="#6c7be0"/></svg>
<div class="a" style="left:124px;top:219px;width:1px;height:15px;background:#cfcfcf;"></div>
<svg style="left:133px;top:218px;" width="12" height="16" viewBox="0 0 12 16"><path d="M2 8 A4 4 0 1 1 9.5 8" fill="none" stroke="#a0a0a0" stroke-width="2"/><path d="M4.5 4.5h2.2v6.5l4.3 1.3V16H5L1 11.5l1-1 2.5 1.5z" fill="#b2b2e0"/></svg>
<svg style="left:155px;top:221px;" width="16" height="11" viewBox="0 0 16 11"><path d="M0 1.5h16M0 5.5h16M0 9.5h16" stroke="#444" stroke-width="1.8"/></svg>
<svg style="left:177px;top:225px;" width="5" height="3" viewBox="0 0 5 3"><path d="M0 0h5l-2.5 3z" fill="#777"/></svg>
<svg style="left:266px;top:220px;" width="7" height="14" viewBox="0 0 7 14"><path d="M0 0L7 7L0 14z" fill="#7b7bd8"/></svg>
<div class="t" style="left:6.3px;top:246px;font-size:11.2px;line-height:14px;color:#23305a;transform:scaleX(1.0040);transform-origin:0 0;">Project</div>
<div class="t" style="left:54px;top:246px;font-size:11.2px;line-height:14px;color:#222;transform:scaleX(1.0363);transform-origin:0 0;">Context</div>
<div class="t" style="left:107px;top:246px;font-size:11.2px;line-height:14px;color:#222;transform:scaleX(1.0065);transform-origin:0 0;">Diagram</div>
<div class="t" style="left:163px;top:246px;font-size:11.2px;line-height:14px;color:#222;transform:scaleX(0.9620);transform-origin:0 0;">Resources</div>
<div class="a" style="left:0px;top:273px;width:284px;height:1px;background:#a8a8a8;"></div>
<svg style="left:16px;top:266px;" width="12" height="8" viewBox="0 0 12 8"><path d="M0 7.5L6 1.5L12 7.5" fill="#f0f0f0" stroke="#a8a8a8"/></svg>
<div class="a" style="left:0px;top:274px;width:284px;height:1px;background:#f0f0f0;"></div>
<div class="a" style="left:0px;top:275px;width:284px;height:727px;background:#fdfdfd;"></div>
<div class="a" style="left:0px;top:300px;width:284px;height:20px;background:#f0f0f0;"></div>
<svg style="left:12px;top:287px;" width="7" height="10" viewBox="0 0 7 10"><path d="M0.8 0.8L6 5L0.8 9.2z" fill="none" stroke="#333" stroke-width="1.1"/></svg>
<svg style="left:26px;top:280px;" width="15" height="15" viewBox="0 0 15 15"><path d="M2.5 3.5V0.8h6v2.7M1.5 5V2.5h9V5" fill="none" stroke="#b07a30" stroke-width="1"/><rect x="0.5" y="5.5" width="14" height="9" fill="#a9c6e6" stroke="#7f9ec4"/><rect x="5" y="9" width="5" height="1.2" fill="#fff"/></svg>
<div class="t" style="left:51px;top:283px;font-size:12px;line-height:15px;transform:scaleX(1.0246);transform-origin:0 0;">DMN</div>
<svg style="left:12px;top:307px;" width="7" height="10" viewBox="0 0 7 10"><path d="M0.8 0.8L6 5L0.8 9.2z" fill="none" stroke="#333" stroke-width="1.1"/></svg>
<svg style="left:26px;top:300px;" width="15" height="15" viewBox="0 0 15 15"><path d="M2.5 3.5V0.8h6v2.7M1.5 5V2.5h9V5" fill="none" stroke="#b07a30" stroke-width="1"/><rect x="0.5" y="5.5" width="14" height="9" fill="#a9c6e6" stroke="#7f9ec4"/><rect x="5" y="9" width="5" height="1.2" fill="#fff"/></svg>
<div class="t" style="left:51px;top:303px;font-size:12px;line-height:15px;transform:scaleX(0.9733);transform-origin:0 0;">Example Model</div>
<div class="a" style="left:0px;top:1002px;width:284px;height:23px;background:#e6e6e6;"></div>
<div class="a" style="left:0px;top:1002px;width:284px;height:1px;background:#a8a8a8;"></div>
<div class="a" style="left:0;top:1002px;width:54px;height:22px;background:#fdfdfd;border:1px solid #9a9a9a;border-top:none"></div>
<div class="a" style="left:1px;top:1020px;width:52px;height:3px;background:#c5d5f0;"></div>
<div class="t" style="left:6px;top:1004px;font-size:11.2px;line-height:14px;transform:scaleX(1.0225);transform-origin:0 0;">Browser</div>
<div class="t" style="left:61px;top:1004px;font-size:11.2px;line-height:14px;transform:scaleX(1.0419);transform-origin:0 0;">Inspector</div>
<div class="a" style="left:57px;top:1020px;width:56px;height:3px;background:#fcd76d;"></div>
<div class="a" style="left:284px;top:179px;width:6px;height:846px;background:#e3e3e3;"></div>
<div class="a" style="left:285px;top:179px;width:4px;height:846px;background:#cccccc;"></div>
<div class="a" style="left:289px;top:179px;width:1px;height:846px;background:#ececec;"></div>
<div class="a" style="left:1561px;top:179px;width:7px;height:846px;background:#e8e8e8;"></div>
<div class="a" style="left:1564px;top:179px;width:3px;height:462px;background:#cdcdcd;"></div>
<div class="a" style="left:1567px;top:179px;width:1px;height:462px;background:#eaeaea;"></div>
<div class="a" style="left:1564px;top:641px;width:4px;height:384px;background:#dadada;"></div>
<div class="a" style="left:290px;top:179px;width:1272px;height:846px;background:#f0f0f0;border:1px solid #c0c0c0"></div>
<div class="a" style="left:291px;top:180px;width:1270px;height:26px;background:#e6e6e6;"></div>
<svg style="left:297px;top:189px;" width="10" height="9" viewBox="0 0 10 9"><path d="M0.5 0.5L4.5 4.5L0.5 8.5M5 0.5L9 4.5L5 8.5" stroke="#444" stroke-width="1.1" fill="none"/></svg>
<svg style="left:1523px;top:191px;" width="9" height="5" viewBox="0 0 9 5"><path d="M0 0h9l-4.5 5z" fill="#111"/></svg>
<svg style="left:1545px;top:190px;" width="7" height="7" viewBox="0 0 7 7"><path d="M0.5 0.5L6.5 6.5M6.5 0.5L0.5 6.5" stroke="#111" stroke-width="1.6"/></svg>
<div class="a" style="left:291px;top:206px;width:1270px;height:2px;background:#c6c6c6;"></div>
<div class="a" style="left:291px;top:208px;width:1270px;height:21px;background:#e6e6e6;"></div>
<div class="a" style="left:291px;top:208px;width:101px;height:21px;background:#fdfdfd;border-right:1px solid #b0b0b0"></div>
<svg style="left:294px;top:211px;" width="16" height="16" viewBox="0 0 16 16"><g transform="scale(1.0)"><circle cx="8" cy="8" r="7" fill="#fff" stroke="#1010e8" stroke-width="1.7"/><circle cx="11.10" cy="9.13" r="2.5" fill="#1010e8"/><circle cx="6.87" cy="11.10" r="2.5" fill="#1010e8"/><circle cx="4.90" cy="6.87" r="2.5" fill="#1010e8"/><circle cx="9.13" cy="4.90" r="2.5" fill="#1010e8"/><path d="M3.5 3.5L12.5 12.5M12.5 3.5L3.5 12.5" stroke="#fff" stroke-width="1.1"/></g></svg>
<div class="t" style="left:312px;top:212px;font-size:11.2px;line-height:14px;color:#111;font-weight:bold;transform:scaleX(0.9567);transform-origin:0 0;">Start Page</div>
<svg style="left:378px;top:216px;" width="8" height="8" viewBox="0 0 8 8"><path d="M0.5 0.5L7.5 7.5M7.5 0.5L0.5 7.5" stroke="#333" stroke-width="1.3"/></svg>
<svg style="left:1531px;top:214px;" width="6" height="8" viewBox="0 0 6 8"><path d="M5.5 0.5L0.5 4L5.5 7.5z" fill="none" stroke="#555"/></svg>
<svg style="left:1548px;top:214px;" width="6" height="8" viewBox="0 0 6 8"><path d="M0.5 0.5L5.5 4L0.5 7.5z" fill="none" stroke="#555"/></svg>
<div class="a" style="left:291px;top:229px;width:1270px;height:27px;background:#f0f0f0;"></div>
<div class="t" style="left:296px;top:233px;font-size:11.2px;line-height:14px;color:#151515;transform:scaleX(1.0249);transform-origin:0 0;">Open Project</div>
<div class="t" style="left:376px;top:233px;font-size:11.2px;line-height:14px;color:#1e2a44;transform:scaleX(1.0167);transform-origin:0 0;">Create from Pattern</div>
<div class="t" style="left:489px;top:233px;font-size:11.2px;line-height:14px;color:#151515;transform:scaleX(1.0189);transform-origin:0 0;">Add Diagram</div>
<div class="t" style="left:569px;top:233px;font-size:11.2px;line-height:14px;color:#151515;transform:scaleX(1.0116);transform-origin:0 0;">Guidance</div>
<div class="a" style="left:291px;top:256px;width:1270px;height:1px;background:#a0a0a0;"></div>
<svg style="left:420px;top:250px;" width="12" height="7" viewBox="0 0 12 7"><path d="M0 6.5L6 0.5L12 6.5" fill="#f0f0f0" stroke="#a0a0a0"/></svg>
<div class="a" style="left:421px;top:256px;width:10px;height:1px;background:#f0f0f0;"></div>
<div class="a" style="left:300px;top:281px;width:319px;height:24px;background:#e3e3e3;"></div>
<div class="a" style="left:300px;top:305px;width:319px;height:1px;background:#8a8a8a;"></div>
<div class="a" style="left:300px;top:306px;width:319px;height:615px;background:#fdfdfd;"></div>
<div class="t" style="left:306px;top:287px;font-size:11.2px;line-height:14px;transform:scaleX(0.9933);transform-origin:0 0;">SysML</div>
<svg style="left:594px;top:288px;" width="16" height="11" viewBox="0 0 16 11"><path d="M0 1h16M0 5.5h16M0 10h16" stroke="#333" stroke-width="1.8"/></svg>
<svg style="left:603px;top:311px;" width="13" height="12" viewBox="0 0 13 12"><circle cx="8" cy="4.5" r="3.5" fill="none" stroke="#333" stroke-width="1.4"/><path d="M5.5 7L1 11.5" stroke="#333" stroke-width="2"/></svg>
<svg style="left:306px;top:334px;" width="7" height="10" viewBox="0 0 7 10"><path d="M0.8 0.8L6 5L0.8 9.2z" fill="none" stroke="#333" stroke-width="1.1"/></svg>
<div class="t" style="left:323px;top:331px;font-size:12px;line-height:15px;transform:scaleX(0.9526);transform-origin:0 0;">SysML 1.5 Project Structures</div>
<svg style="left:306px;top:356px;" width="7" height="10" viewBox="0 0 7 10"><path d="M0.8 0.8L6 5L0.8 9.2z" fill="none" stroke="#333" stroke-width="1.1"/></svg>
<div class="t" style="left:323px;top:353px;font-size:12px;line-height:15px;transform:scaleX(0.9579);transform-origin:0 0;">SysML 1.5 Requirements Diagrams</div>
<svg style="left:306px;top:378px;" width="7" height="10" viewBox="0 0 7 10"><path d="M0.8 0.8L6 5L0.8 9.2z" fill="none" stroke="#333" stroke-width="1.1"/></svg>
<div class="t" style="left:323px;top:375px;font-size:12px;line-height:15px;transform:scaleX(0.9284);transform-origin:0 0;">SysML 1.5 Use Case Diagrams</div>
<svg style="left:306px;top:400px;" width="7" height="10" viewBox="0 0 7 10"><path d="M0.8 0.8L6 5L0.8 9.2z" fill="none" stroke="#333" stroke-width="1.1"/></svg>
<div class="t" style="left:323px;top:397px;font-size:12px;line-height:15px;transform:scaleX(0.9762);transform-origin:0 0;">SysML 1.5 Activity Diagrams</div>
<svg style="left:306px;top:422px;" width="7" height="10" viewBox="0 0 7 10"><path d="M0.8 0.8L6 5L0.8 9.2z" fill="none" stroke="#333" stroke-width="1.1"/></svg>
<div class="t" style="left:323px;top:419px;font-size:12px;line-height:15px;transform:scaleX(0.9748);transform-origin:0 0;">SysML 1.5 Block Definition Diagrams</div>
<svg style="left:306px;top:444px;" width="7" height="10" viewBox="0 0 7 10"><path d="M0.8 0.8L6 5L0.8 9.2z" fill="none" stroke="#333" stroke-width="1.1"/></svg>
<div class="t" style="left:323px;top:441px;font-size:12px;line-height:15px;transform:scaleX(0.9627);transform-origin:0 0;">SysML 1.5 Internal Block Diagrams</div>
<svg style="left:306px;top:466px;" width="7" height="10" viewBox="0 0 7 10"><path d="M0.8 0.8L6 5L0.8 9.2z" fill="none" stroke="#333" stroke-width="1.1"/></svg>
<div class="t" style="left:323px;top:463px;font-size:12px;line-height:15px;transform:scaleX(0.9578);transform-origin:0 0;">SysML 1.5 Parametric Diagrams</div>
<svg style="left:306px;top:488px;" width="7" height="10" viewBox="0 0 7 10"><path d="M0.8 0.8L6 5L0.8 9.2z" fill="none" stroke="#333" stroke-width="1.1"/></svg>
<div class="t" style="left:323px;top:485px;font-size:12px;line-height:15px;transform:scaleX(0.9582);transform-origin:0 0;">SysML 1.5 State Machine Diagrams</div>
<svg style="left:306px;top:510px;" width="7" height="10" viewBox="0 0 7 10"><path d="M0.8 0.8L6 5L0.8 9.2z" fill="none" stroke="#333" stroke-width="1.1"/></svg>
<div class="t" style="left:323px;top:507px;font-size:12px;line-height:15px;transform:scaleX(0.9375);transform-origin:0 0;">SysML 1.5 Libraries</div>
<svg style="left:306px;top:532px;" width="7" height="10" viewBox="0 0 7 10"><path d="M0.8 0.8L6 5L0.8 9.2z" fill="none" stroke="#333" stroke-width="1.1"/></svg>
<div class="t" style="left:323px;top:529px;font-size:12px;line-height:15px;transform:scaleX(0.9614);transform-origin:0 0;">SysML 1.5 Model Elements</div>
<svg style="left:306px;top:554px;" width="7" height="10" viewBox="0 0 7 10"><path d="M0.8 0.8L6 5L0.8 9.2z" fill="none" stroke="#333" stroke-width="1.1"/></svg>
<div class="t" style="left:323px;top:551px;font-size:12px;line-height:15px;transform:scaleX(0.9320);transform-origin:0 0;">SysML Glossary</div>
<svg style="left:306px;top:576px;" width="7" height="10" viewBox="0 0 7 10"><path d="M0.8 0.8L6 5L0.8 9.2z" fill="none" stroke="#333" stroke-width="1.1"/></svg>
<div class="t" style="left:323px;top:573px;font-size:12px;line-height:15px;transform:scaleX(0.9655);transform-origin:0 0;">Modelica Case Studies</div>
<svg style="left:307px;top:598px;" width="8" height="9" viewBox="0 0 8 9"><path d="M8 0V9H0z" fill="#333"/></svg>
<div class="t" style="left:323px;top:595px;font-size:12px;line-height:15px;transform:scaleX(0.8668);transform-origin:0 0;">SysPhS</div>
<div class="a" style="left:338px;top:614px;width:281px;height:21px;background:#cccccc;border:1px dotted #111"></div>
<svg style="left:340px;top:618px;" width="15" height="13" viewBox="0 0 15 13"><rect x="0.5" y="0.5" width="14" height="12" fill="#fdfdfd" stroke="#c08040"/><rect x="4" y="4" width="7" height="5" fill="none" stroke="#4060b0"/><path d="M4 6.5h7" stroke="#4060b0"/></svg>
<div class="t" style="left:359px;top:617px;font-size:12px;line-height:15px;transform:scaleX(0.9250);transform-origin:0 0;">SysPhS Library</div>
<div class="a" style="left:619px;top:279px;width:2px;height:642px;background:#f0f0f0;"></div>
<div class="a" style="left:621px;top:279px;width:6px;height:644px;background:#e3e3e3;"></div>
<div class="a" style="left:621px;top:923px;width:940px;height:1px;background:#e8e8e8;"></div>
<div class="a" style="left:623px;top:596px;width:2px;height:2px;background:#b0b0b0;"></div>
<div class="a" style="left:623px;top:600px;width:2px;height:2px;background:#b0b0b0;"></div>
<div class="a" style="left:623px;top:604px;width:2px;height:2px;background:#b0b0b0;"></div>
<div class="a" style="left:627px;top:279px;width:907px;height:644px;background:#ffffff;"></div>
<div class="a" style="left:1534px;top:279px;width:17px;height:644px;background:#e4e4e4;"></div>
<div class="a" style="left:1534px;top:279px;width:17px;height:17px;background:#fdfdfd;border:1px solid #a6a6a6"></div>
<svg style="left:1538px;top:284px;" width="9" height="5" viewBox="0 0 9 5"><path d="M0 5h9L4.5 0z" fill="#606060"/></svg>
<div class="a" style="left:1534px;top:296px;width:17px;height:130px;background:#fdfdfd;border:1px solid #a6a6a6"></div>
<div class="a" style="left:1534px;top:906px;width:17px;height:17px;background:#fdfdfd;border:1px solid #a6a6a6"></div>
<svg style="left:1538px;top:912px;" width="9" height="5" viewBox="0 0 9 5"><path d="M0 0h9L4.5 5z" fill="#606060"/></svg>
<div class="a" style="left:298px;top:946px;width:120px;height:23px;background:#fdfdfd;border:1px solid #7a7a7a"></div>
<div class="t" style="left:320px;top:950px;font-size:11px;line-height:14px;transform:scaleX(0.9510);transform-origin:0 0;">Create Model(s)</div>
<div class="t" style="left:454.5px;top:950px;font-size:11px;line-height:14px;transform:scaleX(1.0241);transform-origin:0 0;">Add To:</div>
<div class="a" style="left:503px;top:946px;width:196px;height:23px;background:#f0f0f0;border:1px solid #c2c2c2"></div>
<div class="t" style="left:508.5px;top:949px;font-size:11px;line-height:14px;transform:scaleX(0.9365);transform-origin:0 0;">Example Model</div>
<div class="a" style="left:698px;top:946px;width:24px;height:23px;background:#fdfdfd;border:1px solid #a8a8a8"></div>
<svg style="left:703px;top:950px;" width="15" height="14" viewBox="0 0 15 14"><path d="M1 4.5h12.5v9H1z" fill="#f4d27a" stroke="#a07020"/><path d="M1 4.5V3h4l1 1.5" fill="none" stroke="#a07020"/><path d="M9 2.5 Q12 0.5 13.5 3" stroke="#333" fill="none"/></svg>
<div class="a" style="left:729px;top:952px;width:11px;height:11px;background:#f8f8f8;border:1px solid #c8c8c8"></div>
<div class="t" style="left:743px;top:950px;font-size:11px;line-height:14px;color:#a0a0a0;transform:scaleX(0.9326);transform-origin:0 0;">Customize Pattern on import</div>
<div class="a" style="left:900px;top:952px;width:11px;height:11px;background:#fdfdfd;border:1px solid #333"></div>
<div class="t" style="left:914px;top:950px;font-size:11px;line-height:14px;transform:scaleX(0.9691);transform-origin:0 0;">Combine with selected Package</div>
<div class="t n" style="left:1021px;top:291px;font-size:20.5px;line-height:26px;color:#3473b8;font-weight:bold;transform:scaleX(0.8644);transform-origin:0 0;">SysPhS Library</div>
<div class="t" style="left:639px;top:322px;font-size:15.3px;line-height:19px;color:#111;transform:scaleX(1.0171);transform-origin:0 0">The SysPhS library consists of platform independent types, units and quantities to help create SysPhS models. There are two</div>
<div class="t" style="left:639px;top:342px;font-size:15.3px;line-height:19px;color:#111;transform:scaleX(1.0192);transform-origin:0 0">broad categories: <i>Signal Flow</i>, and <i>Physical Interaction</i>.</div>
<div class="t" style="left:639px;top:367px;font-size:15.3px;line-height:19px;color:#111;transform:scaleX(1.0239);transform-origin:0 0">These libraries can be used on multiple SysPhS models created in the repository. It is recommended that they are downloaded to</div>
<div class="t" style="left:639px;top:385px;font-size:15.3px;line-height:19px;color:#111;transform:scaleX(0.9967);transform-origin:0 0">a unique Package, after which a single reference to that Package can be set in any SysPhS model.</div>
<div class="t n" style="left:1036px;top:427px;font-size:20.5px;line-height:26px;color:#3473b8;font-weight:bold;transform:scaleX(0.8868);transform-origin:0 0;">Signal Flow</div>
<div class="a" style="left:866px;top:456px;width:103px;height:62px;border:1px solid #857373;background:linear-gradient(90deg,#fefbf8 0%,#fbf4ee 55%,#efdfd2 100%);box-shadow:1.5px 1.5px 1px rgba(90,90,90,0.3)"></div>
<div class="a" style="left:866px;top:482px;width:103px;height:1px;background:#7a6666;"></div>
<div class="t n" style="left:895.2px;top:461.5px;font-size:6.6px;line-height:8px;color:#333;transform:scaleX(0.9120);transform-origin:0 0;">«interfaceBlock»</div>
<div class="t n" style="left:887.0px;top:469.5px;font-size:6.6px;line-height:8px;color:#111;font-weight:bold;transform:scaleX(0.8800);transform-origin:0 0;">CurrentSignalElement</div>
<div class="t n" style="left:901.8px;top:484.5px;font-size:6.6px;line-height:8px;color:#222;font-style:italic;transform:scaleX(0.9233);transform-origin:0 0;">signal flows</div>
<div class="t n" style="left:869px;top:493.5px;font-size:6.6px;line-height:8px;color:#222;transform:scaleX(0.9087);transform-origin:0 0;">inout i : Current</div>
<div class="a" style="left:1194px;top:456px;width:104px;height:62px;border:1px solid #857373;background:linear-gradient(90deg,#fefbf8 0%,#fbf4ee 55%,#efdfd2 100%);box-shadow:1.5px 1.5px 1px rgba(90,90,90,0.3)"></div>
<div class="a" style="left:1194px;top:482px;width:104px;height:1px;background:#7a6666;"></div>
<div class="t n" style="left:1223.5px;top:461.5px;font-size:6.6px;line-height:8px;color:#333;transform:scaleX(0.9222);transform-origin:0 0;">«interfaceBlock»</div>
<div class="t n" style="left:1215.2px;top:469.5px;font-size:6.6px;line-height:8px;color:#111;font-weight:bold;transform:scaleX(0.8964);transform-origin:0 0;">VoltageSignalElement</div>
<div class="t n" style="left:1230.2px;top:484.5px;font-size:6.6px;line-height:8px;color:#222;font-style:italic;transform:scaleX(0.9233);transform-origin:0 0;">signal flows</div>
<div class="t n" style="left:1197px;top:493.5px;font-size:6.6px;line-height:8px;color:#222;transform:scaleX(0.9581);transform-origin:0 0;">inout v : Voltage</div>
<svg style="left:0px;top:0px;" width="1" height="1" viewBox="0 0 1 1"></svg>
<svg style="left:0;top:0" width="1919" height="1080"><path d="M917.5 529V552.5M840.5 564V552.5H995.5V564" stroke="#5a6a86" stroke-width="1" fill="none"/><path d="M917.5 518 L913.0 529 H922.0 Z" fill="#fff" stroke="#5a6a86" stroke-width="1"/></svg>
<svg style="left:0px;top:0px;" width="1" height="1" viewBox="0 0 1 1"></svg>
<svg style="left:0;top:0" width="1919" height="1080"><path d="M1245.5 529V552.5M1166.5 564V552.5H1328.5V564" stroke="#5a6a86" stroke-width="1" fill="none"/><path d="M1245.5 518 L1241.0 529 H1250.0 Z" fill="#fff" stroke="#5a6a86" stroke-width="1"/></svg>
<div class="a" style="left:766px;top:564px;width:150px;height:52px;border:1px solid #857373;background:linear-gradient(90deg,#fefbf8 0%,#fbf4ee 55%,#efdfd2 100%);box-shadow:1.5px 1.5px 1px rgba(90,90,90,0.3)"></div>
<div class="a" style="left:766px;top:589px;width:150px;height:1px;background:#7a6666;"></div>
<div class="t n" style="left:818.5px;top:569.5px;font-size:6.6px;line-height:8px;color:#333;transform:scaleX(0.9222);transform-origin:0 0;">«interfaceBlock»</div>
<div class="t n" style="left:808.0px;top:577.5px;font-size:6.6px;line-height:8px;color:#111;font-weight:bold;transform:scaleX(0.8779);transform-origin:0 0;">CurrentSignalInElement</div>
<div class="t n" style="left:825.2px;top:591.5px;font-size:6.6px;line-height:8px;color:#222;font-style:italic;transform:scaleX(0.9233);transform-origin:0 0;">signal flows</div>
<div class="t n" style="left:769px;top:600.5px;font-size:6.6px;line-height:8px;color:#222;transform:scaleX(0.9228);transform-origin:0 0;">in i : Current {redefines CurrentSignalElement::i}</div>
<div class="a" style="left:919px;top:564px;width:155px;height:52px;border:1px solid #857373;background:linear-gradient(90deg,#fefbf8 0%,#fbf4ee 55%,#efdfd2 100%);box-shadow:1.5px 1.5px 1px rgba(90,90,90,0.3)"></div>
<div class="a" style="left:919px;top:589px;width:155px;height:1px;background:#7a6666;"></div>
<div class="t n" style="left:974.1px;top:569.5px;font-size:6.6px;line-height:8px;color:#333;transform:scaleX(0.9161);transform-origin:0 0;">«interfaceBlock»</div>
<div class="t n" style="left:960.6px;top:577.5px;font-size:6.6px;line-height:8px;color:#111;font-weight:bold;transform:scaleX(0.8887);transform-origin:0 0;">CurrentSignalOutElement</div>
<div class="t n" style="left:980.8px;top:591.5px;font-size:6.6px;line-height:8px;color:#222;font-style:italic;transform:scaleX(0.9233);transform-origin:0 0;">signal flows</div>
<div class="t n" style="left:922px;top:600.5px;font-size:6.6px;line-height:8px;color:#222;transform:scaleX(0.9247);transform-origin:0 0;">out i : Current {redefines CurrentSignalElement::i}</div>
<div class="a" style="left:1088px;top:564px;width:157px;height:52px;border:1px solid #857373;background:linear-gradient(90deg,#fefbf8 0%,#fbf4ee 55%,#efdfd2 100%);box-shadow:1.5px 1.5px 1px rgba(90,90,90,0.3)"></div>
<div class="a" style="left:1088px;top:589px;width:157px;height:1px;background:#7a6666;"></div>
<div class="t n" style="left:1144.0px;top:569.5px;font-size:6.6px;line-height:8px;color:#333;transform:scaleX(0.9222);transform-origin:0 0;">«interfaceBlock»</div>
<div class="t n" style="left:1133.0px;top:577.5px;font-size:6.6px;line-height:8px;color:#111;font-weight:bold;transform:scaleX(0.8970);transform-origin:0 0;">VoltageInSignalElement</div>
<div class="t n" style="left:1150.8px;top:591.5px;font-size:6.6px;line-height:8px;color:#222;font-style:italic;transform:scaleX(0.9233);transform-origin:0 0;">signal flows</div>
<div class="t n" style="left:1091px;top:600.5px;font-size:6.6px;line-height:8px;color:#222;transform:scaleX(0.9476);transform-origin:0 0;">in v : Voltage {redefines VoltageSignalElement::v}</div>
<div class="a" style="left:1248px;top:564px;width:161px;height:52px;border:1px solid #857373;background:linear-gradient(90deg,#fefbf8 0%,#fbf4ee 55%,#efdfd2 100%);box-shadow:1.5px 1.5px 1px rgba(90,90,90,0.3)"></div>
<div class="a" style="left:1248px;top:589px;width:161px;height:1px;background:#7a6666;"></div>
<div class="t n" style="left:1306.0px;top:569.5px;font-size:6.6px;line-height:8px;color:#333;transform:scaleX(0.9222);transform-origin:0 0;">«interfaceBlock»</div>
<div class="t n" style="left:1293.0px;top:577.5px;font-size:6.6px;line-height:8px;color:#111;font-weight:bold;transform:scaleX(0.8854);transform-origin:0 0;">VoltageOutSignalElement</div>
<div class="t n" style="left:1312.8px;top:591.5px;font-size:6.6px;line-height:8px;color:#222;font-style:italic;transform:scaleX(0.9233);transform-origin:0 0;">signal flows</div>
<div class="t n" style="left:1251px;top:600.5px;font-size:6.6px;line-height:8px;color:#222;transform:scaleX(0.9488);transform-origin:0 0;">out v : Voltage {redefines VoltageSignalElement::v}</div>
<div class="a" style="left:1030px;top:632px;width:103px;height:62px;border:1px solid #857373;background:linear-gradient(90deg,#fefbf8 0%,#fbf4ee 55%,#efdfd2 100%);box-shadow:1.5px 1.5px 1px rgba(90,90,90,0.3)"></div>
<div class="a" style="left:1030px;top:657px;width:103px;height:1px;background:#7a6666;"></div>
<div class="t n" style="left:1059.2px;top:637.5px;font-size:6.6px;line-height:8px;color:#333;transform:scaleX(0.9120);transform-origin:0 0;">«interfaceBlock»</div>
<div class="t n" style="left:1046.7px;top:645.5px;font-size:6.6px;line-height:8px;color:#111;font-weight:bold;transform:scaleX(0.8664);transform-origin:0 0;">ResistanceSignalElement</div>
<div class="t n" style="left:1061.2px;top:659.5px;font-size:6.6px;line-height:8px;color:#222;font-style:italic;transform:scaleX(0.9436);transform-origin:0 0;">flow properties</div>
<div class="t n" style="left:1033px;top:668.5px;font-size:6.6px;line-height:8px;color:#222;transform:scaleX(0.9028);transform-origin:0 0;">inout r : Resistance</div>
<svg style="left:0px;top:0px;" width="1" height="1" viewBox="0 0 1 1"></svg>
<svg style="left:0;top:0" width="1919" height="1080"><path d="M1081.5 705V727.5M995.5 734V727.5H1169.5V734" stroke="#5a6a86" stroke-width="1" fill="none"/><path d="M1081.5 694 L1077.0 705 H1086.0 Z" fill="#fff" stroke="#5a6a86" stroke-width="1"/></svg>
<div class="a" style="left:911px;top:734px;width:169px;height:52px;border:1px solid #857373;background:linear-gradient(90deg,#fefbf8 0%,#fbf4ee 55%,#efdfd2 100%);box-shadow:1.5px 1.5px 1px rgba(90,90,90,0.3)"></div>
<div class="a" style="left:911px;top:759px;width:169px;height:1px;background:#7a6666;"></div>
<div class="t n" style="left:973.0px;top:739.5px;font-size:6.6px;line-height:8px;color:#333;transform:scaleX(0.9222);transform-origin:0 0;">«interfaceBlock»</div>
<div class="t n" style="left:957.8px;top:747.5px;font-size:6.6px;line-height:8px;color:#111;font-weight:bold;transform:scaleX(0.8747);transform-origin:0 0;">ResistanceInSignalElement</div>
<div class="t n" style="left:975.0px;top:761.5px;font-size:6.6px;line-height:8px;color:#222;font-style:italic;transform:scaleX(0.9553);transform-origin:0 0;">flow properties</div>
<div class="t n" style="left:914px;top:770.5px;font-size:6.6px;line-height:8px;color:#222;transform:scaleX(0.9088);transform-origin:0 0;">in r : Resistance {redefines ResistanceSignalElement::r}</div>
<div class="a" style="left:1083px;top:734px;width:174px;height:52px;border:1px solid #857373;background:linear-gradient(90deg,#fefbf8 0%,#fbf4ee 55%,#efdfd2 100%);box-shadow:1.5px 1.5px 1px rgba(90,90,90,0.3)"></div>
<div class="a" style="left:1083px;top:759px;width:174px;height:1px;background:#7a6666;"></div>
<div class="t n" style="left:1147.5px;top:739.5px;font-size:6.6px;line-height:8px;color:#333;transform:scaleX(0.9222);transform-origin:0 0;">«interfaceBlock»</div>
<div class="t n" style="left:1130.5px;top:747.5px;font-size:6.6px;line-height:8px;color:#111;font-weight:bold;transform:scaleX(0.8615);transform-origin:0 0;">ResistanceOutSignalElement</div>
<div class="t n" style="left:1149.7px;top:761.5px;font-size:6.6px;line-height:8px;color:#222;font-style:italic;transform:scaleX(0.9483);transform-origin:0 0;">flow properties</div>
<div class="t n" style="left:1086px;top:770.5px;font-size:6.6px;line-height:8px;color:#222;transform:scaleX(0.9126);transform-origin:0 0;">out r : Resistance {redefines ResistanceSignalElement::r}</div>
<div class="t" style="left:967px;top:802.5px;font-size:10.6px;line-height:13px;color:#111;font-family:'Liberation Serif',serif;transform:scaleX(0.9334);transform-origin:0 0;">Figure 3:</div>
<div class="t" style="left:1014.7px;top:802.5px;font-size:10.6px;line-height:13px;color:#111;font-family:'Liberation Serif',serif;transform:scaleX(0.9321);transform-origin:0 0;">Elements for signal flows of electrical quantities</div>
<div class="a" style="left:999px;top:844px;width:133px;height:70px;border:1px solid #857373;background:linear-gradient(90deg,#fefbf8 0%,#fbf4ee 55%,#efdfd2 100%);box-shadow:1.5px 1.5px 1px rgba(90,90,90,0.3)"></div>
<div class="a" style="left:999px;top:873px;width:133px;height:1px;background:#7a6666;"></div>
<div class="t n" style="left:1039.3px;top:849.5px;font-size:6.6px;line-height:8px;color:#333;transform:scaleX(1.0718);transform-origin:0 0;">«interfaceBlock»</div>
<div class="t n" style="left:1024.5px;top:857.5px;font-size:6.6px;line-height:8px;color:#111;font-weight:bold;transform:scaleX(1.0302);transform-origin:0 0;">RealVectorSignalElement</div>
<div class="t n" style="left:1047.5px;top:875.5px;font-size:6.6px;line-height:8px;color:#222;font-style:italic;transform:scaleX(1.0552);transform-origin:0 0;">signal flows</div>
<div class="t n" style="left:1002px;top:884.5px;font-size:6.6px;line-height:8px;color:#222;transform:scaleX(1.0837);transform-origin:0 0;">none rSig : Real[1..*]</div>
<svg style="left:0;top:0" width="1919" height="1080"><path d="M1065.5 915 L1062 923 M1065.5 915 L1069 923" stroke="#5a6a86" fill="none"/></svg>
<div class="a" style="left:1568px;top:179px;width:351px;height:35px;background:#e6e6e6;"></div>
<div class="t n" style="left:1573px;top:185px;font-size:18.3px;line-height:23px;transform:scaleX(1.0191);transform-origin:0 0;">Properties</div>
<svg style="left:1867px;top:194px;" width="9" height="6" viewBox="0 0 9 6"><path d="M0 0h9l-4.5 6z" fill="#666"/></svg>
<svg style="left:1886px;top:192px;" width="8" height="9" viewBox="0 0 8 9"><path d="M1.5 0.5h5M2.5 0.5v5M5.5 0.5v5M0.5 5.5h7M4 5.5V9" stroke="#555" stroke-width="1.2" fill="none"/></svg>
<svg style="left:1905px;top:193px;" width="9" height="8" viewBox="0 0 9 8"><path d="M0.5 0.5L8.5 7.5M8.5 0.5L0.5 7.5" stroke="#555" stroke-width="1.4"/></svg>
<div class="a" style="left:1568px;top:214px;width:351px;height:24px;background:#f0f0f0;"></div>
<svg style="left:1574px;top:219px;" width="15" height="14" viewBox="0 0 15 14"><path d="M0.8 0.8h13.4v12.4H0.8z" fill="none" stroke="#9ab4d4" stroke-width="1.6"/><rect x="3.5" y="1" width="8" height="5" fill="#9ab4d4"/><rect x="6.5" y="9.5" width="2" height="3" fill="#9ab4d4"/></svg>
<svg style="left:1599px;top:221px;" width="13" height="10" viewBox="0 0 13 10"><path d="M0 1h13M0 5h13M0 9h13" stroke="#444" stroke-width="1.8"/></svg>
<svg style="left:1619px;top:225px;" width="5" height="3" viewBox="0 0 5 3"><path d="M0 0h5l-2.5 3z" fill="#777"/></svg>
<svg style="left:1630px;top:219px;" width="16" height="13" viewBox="0 0 16 13"><rect x="0.5" y="3.5" width="15" height="9" fill="#e8f0f8" stroke="#345"/><path d="M1 6 L6 1 L14 1 L15 4" fill="#e8d060" stroke="#345"/><path d="M4 5 L9 3 M7 6 L12 3" stroke="#345"/><path d="M8 4v8" stroke="#345"/></svg>
<svg style="left:1656px;top:220px;" width="8" height="13" viewBox="0 0 8 13"><path d="M0 0L8 6.5L0 13z" fill="#b8b8e8"/></svg>
<div class="t" style="left:1574.5px;top:242px;font-size:11.2px;line-height:14px;color:#23305a;transform:scaleX(0.9857);transform-origin:0 0;">Element</div>
<div class="a" style="left:1568px;top:265px;width:351px;height:1px;background:#a0a0a0;"></div>
<svg style="left:1589px;top:259px;" width="12" height="7" viewBox="0 0 12 7"><path d="M0 6.5L6 0.5L12 6.5" fill="#f0f0f0" stroke="#a0a0a0"/></svg>
<div class="a" style="left:1590px;top:265px;width:10px;height:1px;background:#f0f0f0;"></div>
<div class="a" style="left:1568px;top:266px;width:351px;height:346px;background:#fcfcfc;"></div>
<div class="a" style="left:1568px;top:266px;width:351px;height:6px;background:#f0f0f0;"></div>
<div class="a" style="left:1568px;top:272px;width:351px;height:18px;background:#f0f0f0;"></div>
<svg style="left:1574px;top:278px;" width="6" height="6" viewBox="0 0 6 6"><path d="M6 0V6H0z" fill="#999"/></svg>
<div class="t" style="left:1589px;top:275px;font-size:12px;line-height:15px;font-weight:bold;transform:scaleX(0.8951);transform-origin:0 0;">General</div>
<div class="a" style="left:1568px;top:290px;width:17px;height:133px;background:#f0f0f0;"></div>
<div class="a" style="left:1585px;top:292px;width:123px;height:17px;background:#fdfdfd;border:1px solid #dcdcdc"></div>
<div class="t" style="left:1589px;top:293px;font-size:11.2px;line-height:14px;color:#a0a0a0;transform:scaleX(0.9606);transform-origin:0 0;">Name</div>
<div class="t" style="left:1589px;top:313px;font-size:12px;line-height:15px;transform:scaleX(0.9225);transform-origin:0 0;">Type</div>
<div class="t" style="left:1589px;top:332px;font-size:12px;line-height:15px;transform:scaleX(0.9390);transform-origin:0 0;">Stereotype</div>
<div class="t" style="left:1589px;top:351px;font-size:12px;line-height:15px;transform:scaleX(0.9035);transform-origin:0 0;">Alias</div>
<div class="t" style="left:1589px;top:370px;font-size:12px;line-height:15px;transform:scaleX(0.9205);transform-origin:0 0;">Keywords</div>
<div class="t" style="left:1589px;top:389px;font-size:12px;line-height:15px;transform:scaleX(0.9259);transform-origin:0 0;">Status</div>
<div class="t" style="left:1589px;top:407px;font-size:12px;line-height:15px;transform:scaleX(0.9618);transform-origin:0 0;">Version</div>
<div class="a" style="left:1568px;top:423px;width:351px;height:19px;background:#f0f0f0;"></div>
<svg style="left:1574px;top:429px;" width="6" height="8" viewBox="0 0 6 8"><path d="M0.5 0.5L5.5 4L0.5 7.5z" fill="none" stroke="#999"/></svg>
<div class="t" style="left:1589px;top:426px;font-size:12px;line-height:15px;font-weight:bold;transform:scaleX(0.9095);transform-origin:0 0;">Project</div>
<div class="a" style="left:1568px;top:612px;width:351px;height:23px;background:#e6e6e6;"></div>
<div class="a" style="left:1568px;top:612px;width:351px;height:1px;background:#a8a8a8;"></div>
<div class="a" style="left:1568px;top:612px;width:64px;height:21px;background:#fdfdfd;border:1px solid #9a9a9a;border-top:none"></div>
<div class="a" style="left:1569px;top:630px;width:62px;height:3px;background:#c5d5f0;"></div>
<div class="t" style="left:1574px;top:614px;font-size:11.2px;line-height:14px;transform:scaleX(0.9991);transform-origin:0 0;">Properties</div>
<div class="t" style="left:1639px;top:614px;font-size:11.2px;line-height:14px;transform:scaleX(0.9266);transform-origin:0 0;">Locals</div>
<div class="a" style="left:1635px;top:630px;width:39px;height:3px;background:#b5c897;"></div>
<div class="t" style="left:1683px;top:614px;font-size:11.2px;line-height:14px;transform:scaleX(1.0604);transform-origin:0 0;">Debug</div>
<div class="a" style="left:1679px;top:630px;width:43px;height:3px;background:#8fbfa8;"></div>
<div class="a" style="left:1568px;top:635px;width:351px;height:6px;background:#cacaca;"></div>
<div class="a" style="left:1568px;top:641px;width:351px;height:35px;background:#e6e6e6;"></div>
<div class="t n" style="left:1572.5px;top:647px;font-size:18.3px;line-height:23px;transform:scaleX(1.0041);transform-origin:0 0;">Notes</div>
<svg style="left:1867px;top:656px;" width="9" height="6" viewBox="0 0 9 6"><path d="M0 0h9l-4.5 6z" fill="#666"/></svg>
<svg style="left:1886px;top:655px;" width="8" height="9" viewBox="0 0 8 9"><path d="M1.5 0.5h5M2.5 0.5v5M5.5 0.5v5M0.5 5.5h7M4 5.5V9" stroke="#555" stroke-width="1.2" fill="none"/></svg>
<svg style="left:1905px;top:656px;" width="9" height="8" viewBox="0 0 9 8"><path d="M0.5 0.5L8.5 7.5M8.5 0.5L0.5 7.5" stroke="#555" stroke-width="1.4"/></svg>
<div class="a" style="left:1568px;top:676px;width:351px;height:24px;background:#f0f0f0;"></div>
<svg style="left:1577px;top:681px;" width="11" height="14" viewBox="0 0 11 14"><text x="0" y="12" font-family="Liberation Serif" font-weight="bold" font-size="15" fill="#a8a8b8">B</text></svg>
<svg style="left:1600px;top:681px;" width="9" height="14" viewBox="0 0 9 14"><text x="0" y="12" font-family="Liberation Serif" font-style="italic" font-size="15" fill="#a8a8b8">I</text></svg>
<svg style="left:1619px;top:681px;" width="12" height="16" viewBox="0 0 12 16"><text x="0" y="12" font-family="Liberation Serif" font-size="15" fill="#a8a8b8">U</text><path d="M0 15h11" stroke="#a8a8b8"/></svg>
<svg style="left:1641px;top:680px;" width="17" height="17" viewBox="0 0 17 17"><text x="0" y="11" font-family="Liberation Sans" font-size="11" fill="#a8a8b8">A</text><rect x="6" y="0.5" width="4" height="4" fill="#e88080"/><rect x="10" y="0.5" width="4" height="4" fill="#f0c060"/><rect x="8" y="4.5" width="4" height="4" fill="#70b0f0"/><rect x="0" y="12" width="16" height="4" fill="#c8c8c8"/></svg>
<svg style="left:1663px;top:688px;" width="5" height="3" viewBox="0 0 5 3"><path d="M0 0h5l-2.5 3z" fill="#aaa"/></svg>
<div class="a" style="left:1675px;top:681px;width:1px;height:16px;background:#d0d0d0;"></div>
<svg style="left:1684px;top:681px;" width="14" height="13" viewBox="0 0 14 13"><path d="M0 1.5h2M0 6.5h2M0 11.5h2" stroke="#666" stroke-width="2"/><path d="M4 1.5h10M4 6.5h10M4 11.5h10" stroke="#666" stroke-width="1.2"/></svg>
<svg style="left:1705px;top:680px;" width="15" height="16" viewBox="0 0 15 16"><text x="0" y="5" font-size="5" fill="#666" font-family="Liberation Sans">1</text><text x="0" y="10.5" font-size="5" fill="#666" font-family="Liberation Sans">2</text><text x="0" y="16" font-size="5" fill="#666" font-family="Liberation Sans">3</text><path d="M5 2.5h10M5 8h10M5 13.5h10" stroke="#666" stroke-width="1.2"/></svg>
<div class="a" style="left:1727px;top:681px;width:1px;height:16px;background:#d0d0d0;"></div>
<svg style="left:1737px;top:680px;" width="13" height="14" viewBox="0 0 13 14"><path d="M1 8L7 14M7 8L1 14" stroke="#777" stroke-width="1.4"/><text x="8" y="6" font-size="7" fill="#a03030" font-family="Liberation Sans">2</text></svg>
<svg style="left:1759px;top:680px;" width="13" height="16" viewBox="0 0 13 16"><path d="M1 1L7 7M7 1L1 7" stroke="#777" stroke-width="1.4"/><text x="8" y="15" font-size="7" fill="#3050c0" font-family="Liberation Sans">2</text></svg>
<svg style="left:1778px;top:680px;" width="17" height="17" viewBox="0 0 17 17"><circle cx="6.5" cy="6.5" r="6" fill="#4a80c0"/><path d="M2 4 Q6 2 7 6 Q5 9 3 10" fill="#60a060"/><rect x="5" y="10" width="11" height="6" rx="3" fill="#f0d070" stroke="#a08020"/></svg>
<div class="a" style="left:1801px;top:681px;width:1px;height:16px;background:#d0d0d0;"></div>
<svg style="left:1809px;top:680px;" width="14" height="17" viewBox="0 0 14 17"><path d="M0.5 0.5h9l4 4v12H0.5z" fill="#fdfdfd" stroke="#4a70c0"/><path d="M3 5h6M3 8h8M3 11h5" stroke="#a0a8c0"/><path d="M8 15 L10 10 L12 15" stroke="#d03030" fill="none"/></svg>
<div class="a" style="left:1568px;top:700px;width:351px;height:325px;background:#ffffff;"></div>
<div class="a" style="left:0px;top:1025px;width:1919px;height:29px;background:#e6e6e6;"></div>
<div class="t" style="left:9px;top:1030px;font-size:11.2px;line-height:14px;transform:scaleX(1.0260);transform-origin:0 0;">System Output</div>
<div class="a" style="left:7px;top:1048px;width:78px;height:6px;background:#d3d3d3;"></div>
<div class="a" style="left:0px;top:1054px;width:1919px;height:1px;background:#c6c6c6;"></div>
<div class="a" style="left:0px;top:1055px;width:1919px;height:23px;background:#f0f0f0;"></div>
<div class="a" style="left:0px;top:1078px;width:1919px;height:2px;background:#6f9a80;"></div>
<div class="t" style="left:1525px;top:1059px;font-size:11.2px;line-height:14px;transform:scaleX(0.8764);transform-origin:0 0;">SysML</div>
<div class="a" style="left:1581px;top:1062px;width:1px;height:9px;background:#d0d0d0;"></div>
<div class="a" style="left:1603px;top:1066px;width:9px;height:2px;background:#8a8a8a;"></div>
<div class="a" style="left:1624px;top:1066px;width:84px;height:1px;background:#a0a0a0;"></div>
<div class="a" style="left:1619px;top:1059px;width:5px;height:14px;background:#a8a8a8;"></div>
<svg style="left:1718px;top:1062px;" width="9" height="9" viewBox="0 0 9 9"><path d="M4.5 0v9M0 4.5h9" stroke="#8a8a8a" stroke-width="1.6"/></svg>
<div class="t" style="left:1741.7px;top:1059px;font-size:11.2px;line-height:14px;color:#a3a3a3;transform:scaleX(0.8684);transform-origin:0 0;">CAP</div>
<div class="t" style="left:1780.7px;top:1059px;font-size:11.2px;line-height:14px;color:#a3a3a3;transform:scaleX(0.9919);transform-origin:0 0;">NUM</div>
<div class="t" style="left:1826.7px;top:1059px;font-size:11.2px;line-height:14px;color:#a3a3a3;transform:scaleX(0.8368);transform-origin:0 0;">SCRL</div>
<div class="t" style="left:1871.7px;top:1059px;font-size:11.2px;line-height:14px;color:#a3a3a3;transform:scaleX(0.9335);transform-origin:0 0;">CLOUD</div>
<div class="a" style="left:179px;top:1078px;width:159px;height:1px;background:#e8eee8;"></div>
<div class="a" style="left:179px;top:1079px;width:159px;height:1px;background:#46574c;"></div>
<div class="a" style="left:387px;top:1078px;width:159px;height:1px;background:#e8eee8;"></div>
<div class="a" style="left:387px;top:1079px;width:159px;height:1px;background:#46574c;"></div>
</body></html>
